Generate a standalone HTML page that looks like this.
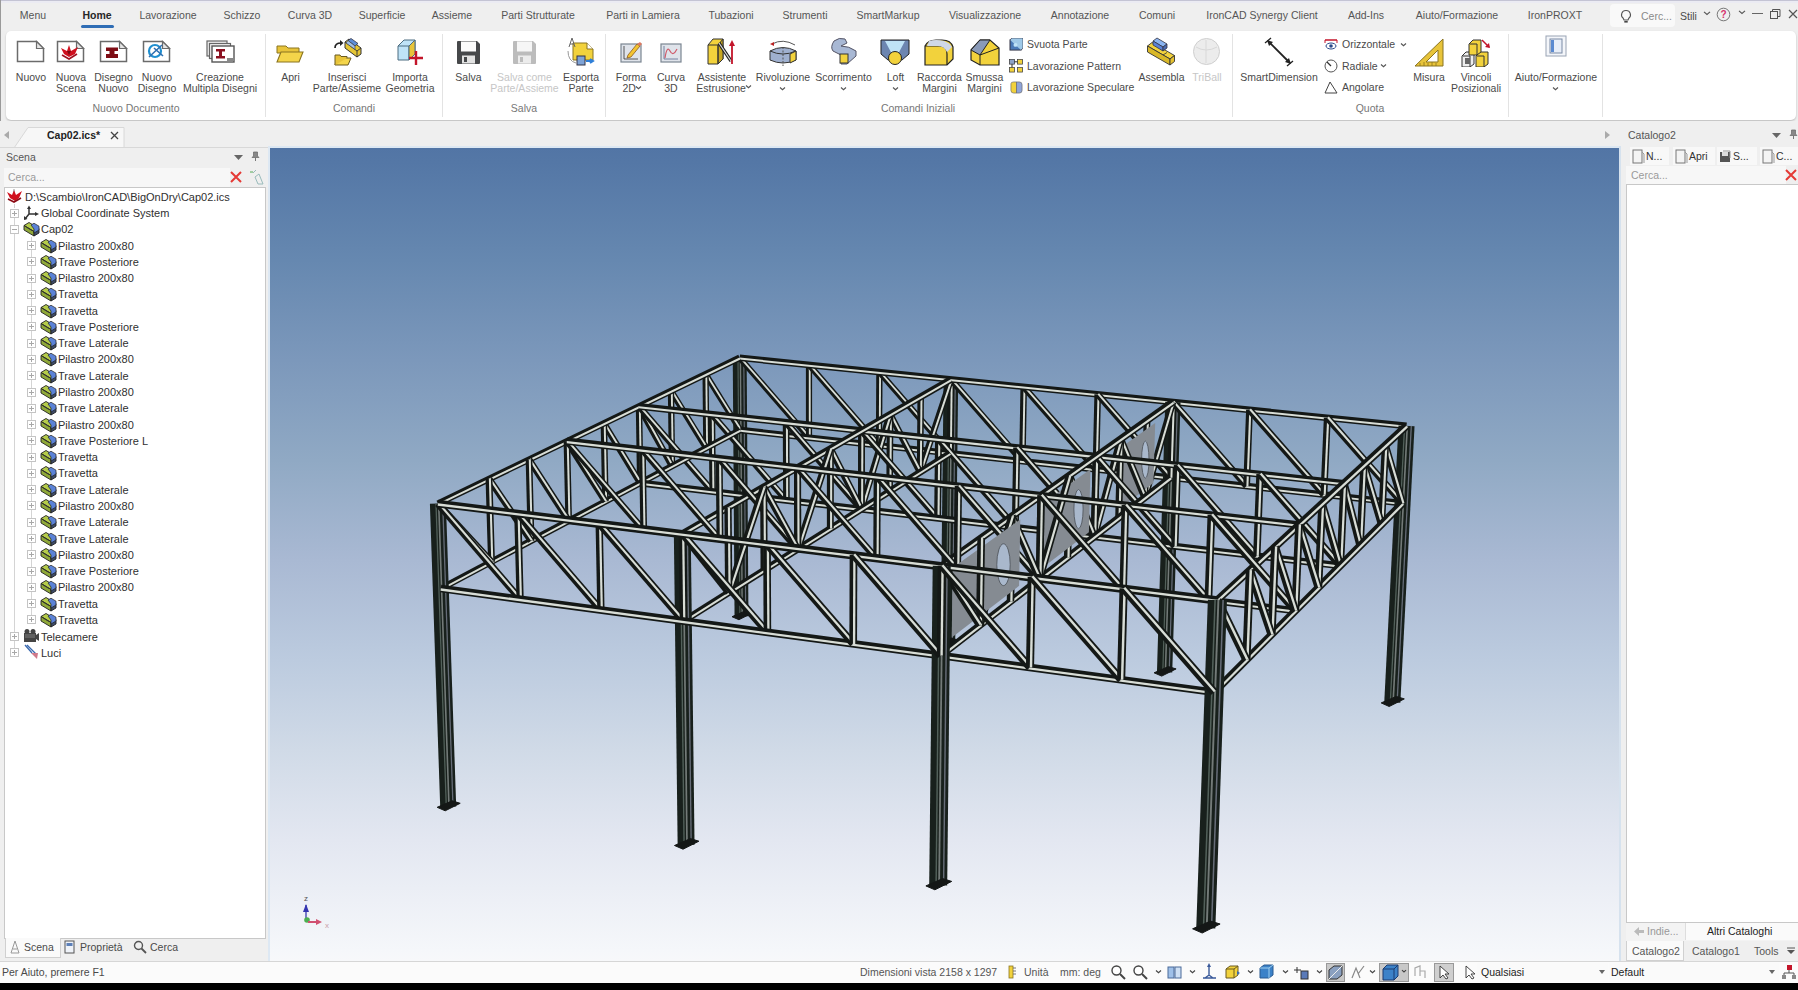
<!DOCTYPE html>
<html><head><meta charset="utf-8"><style>
html,body{margin:0;padding:0;width:1798px;height:990px;overflow:hidden;background:#eee;font-family:"Liberation Sans", sans-serif;}
.b{position:absolute;}
.t{position:absolute;white-space:nowrap;font-family:"Liberation Sans", sans-serif;}
</style></head><body>
<div class="b" style="left:0px;top:0px;width:1798px;height:990px;background:#eeeeee"></div><div class="b" style="left:0px;top:0px;width:1798px;height:31px;background:#efefef"></div><div class="b" style="left:0px;top:0px;width:1798px;height:1px;background:#c4c4d4"></div><div class="b" style="left:0px;top:1px;width:1798px;height:2px;background:#ebebf3"></div><div class="t" style="left:-167px;width:400px;text-align:center;top:4.5px;line-height:21.0px;font-size:10.5px;color:#555;font-weight:normal;">Menu</div><div class="t" style="left:-103px;width:400px;text-align:center;top:4.5px;line-height:21.0px;font-size:10.5px;color:#262626;font-weight:bold;">Home</div><div class="t" style="left:-32px;width:400px;text-align:center;top:4.5px;line-height:21.0px;font-size:10.5px;color:#555;font-weight:normal;">Lavorazione</div><div class="t" style="left:42px;width:400px;text-align:center;top:4.5px;line-height:21.0px;font-size:10.5px;color:#555;font-weight:normal;">Schizzo</div><div class="t" style="left:110px;width:400px;text-align:center;top:4.5px;line-height:21.0px;font-size:10.5px;color:#555;font-weight:normal;">Curva 3D</div><div class="t" style="left:182px;width:400px;text-align:center;top:4.5px;line-height:21.0px;font-size:10.5px;color:#555;font-weight:normal;">Superficie</div><div class="t" style="left:252px;width:400px;text-align:center;top:4.5px;line-height:21.0px;font-size:10.5px;color:#555;font-weight:normal;">Assieme</div><div class="t" style="left:338px;width:400px;text-align:center;top:4.5px;line-height:21.0px;font-size:10.5px;color:#555;font-weight:normal;">Parti Strutturate</div><div class="t" style="left:443px;width:400px;text-align:center;top:4.5px;line-height:21.0px;font-size:10.5px;color:#555;font-weight:normal;">Parti in Lamiera</div><div class="t" style="left:531px;width:400px;text-align:center;top:4.5px;line-height:21.0px;font-size:10.5px;color:#555;font-weight:normal;">Tubazioni</div><div class="t" style="left:605px;width:400px;text-align:center;top:4.5px;line-height:21.0px;font-size:10.5px;color:#555;font-weight:normal;">Strumenti</div><div class="t" style="left:688px;width:400px;text-align:center;top:4.5px;line-height:21.0px;font-size:10.5px;color:#555;font-weight:normal;">SmartMarkup</div><div class="t" style="left:785px;width:400px;text-align:center;top:4.5px;line-height:21.0px;font-size:10.5px;color:#555;font-weight:normal;">Visualizzazione</div><div class="t" style="left:880px;width:400px;text-align:center;top:4.5px;line-height:21.0px;font-size:10.5px;color:#555;font-weight:normal;">Annotazione</div><div class="t" style="left:957px;width:400px;text-align:center;top:4.5px;line-height:21.0px;font-size:10.5px;color:#555;font-weight:normal;">Comuni</div><div class="t" style="left:1062px;width:400px;text-align:center;top:4.5px;line-height:21.0px;font-size:10.5px;color:#555;font-weight:normal;">IronCAD Synergy Client</div><div class="t" style="left:1166px;width:400px;text-align:center;top:4.5px;line-height:21.0px;font-size:10.5px;color:#555;font-weight:normal;">Add-Ins</div><div class="t" style="left:1257px;width:400px;text-align:center;top:4.5px;line-height:21.0px;font-size:10.5px;color:#555;font-weight:normal;">Aiuto/Formazione</div><div class="t" style="left:1355px;width:400px;text-align:center;top:4.5px;line-height:21.0px;font-size:10.5px;color:#555;font-weight:normal;">IronPROXT</div><div class="b" style="left:81px;top:25px;width:33px;height:3px;background:#2f6db5;border-radius:2px"></div><div class="b" style="left:1610px;top:4px;width:65px;height:23px;background:#f9f9f9;border-radius:4px"></div><svg class="b" style="left:1620px;top:9px" width="12" height="15" viewBox="0 0 12 15"><path d="M6 1.5A4.3 4.3 0 0 0 3.2 9.2L4 11H8L8.8 9.2A4.3 4.3 0 0 0 6 1.5Z" fill="none" stroke="#555" stroke-width="1.1"/><rect x="4.3" y="12" width="3.4" height="1.6" fill="#444"/></svg><div class="t" style="left:1641px;top:5.5px;line-height:21.0px;font-size:10.5px;color:#8a8a8a;font-weight:normal;">Cerc...</div><div class="t" style="left:1680px;top:5.5px;line-height:21.0px;font-size:10.5px;color:#4a4a4a;font-weight:normal;">Stili</div><svg class="b" style="left:1703px;top:10px" width="8" height="6" viewBox="0 0 8 6"><path d="M1 1.7999999999999998 L4 4.5 L7 1.7999999999999998" stroke="#555" stroke-width="1.1" fill="none"/></svg><svg class="b" style="left:1716px;top:7px" width="15" height="15" viewBox="0 0 15 15"><circle cx="7.5" cy="7.5" r="6.3" fill="none" stroke="#777" stroke-width="1"/><text x="7.5" y="11.3" text-anchor="middle" font-size="10" font-weight="bold" fill="#d6336c" font-family="Liberation Sans">?</text></svg><svg class="b" style="left:1738px;top:9px" width="8" height="6" viewBox="0 0 8 6"><path d="M1 1.7999999999999998 L4 4.5 L7 1.7999999999999998" stroke="#555" stroke-width="1.1" fill="none"/></svg><div class="b" style="left:1752px;top:13px;width:11px;height:1px;background:#666"></div><svg class="b" style="left:1770px;top:9px" width="11" height="10" viewBox="0 0 11 10"><rect x="0.5" y="2.5" width="7" height="7" fill="none" stroke="#555"/><path d="M2.5 2.5V0.5H10V7.5H8" fill="none" stroke="#555"/></svg><svg class="b" style="left:1788px;top:9px" width="10" height="10" viewBox="0 0 10 10"><path d="M1 1L9 9M9 1L1 9" stroke="#555" stroke-width="1.2"/></svg><div class="b" style="left:6px;top:31px;width:1790px;height:89px;background:#fff;border-radius:5px;box-shadow:0 1px 2px rgba(0,0,0,0.22)"></div><div class="b" style="left:265px;top:34px;width:1px;height:83px;background:#e3e3e3"></div><div class="b" style="left:442px;top:34px;width:1px;height:83px;background:#e3e3e3"></div><div class="b" style="left:605px;top:34px;width:1px;height:83px;background:#e3e3e3"></div><div class="b" style="left:1232px;top:34px;width:1px;height:83px;background:#e3e3e3"></div><div class="b" style="left:1508px;top:34px;width:1px;height:83px;background:#e3e3e3"></div><div class="b" style="left:1602px;top:34px;width:1px;height:83px;background:#e3e3e3"></div><div class="t" style="left:-169px;width:400px;text-align:center;top:66.5px;line-height:21.0px;font-size:10.5px;color:#4a4a4a;font-weight:normal;">Nuovo</div><svg class="b" style="left:16px;top:40px" width="29" height="23" viewBox="0 0 29 23" preserveAspectRatio="none"><path d="M1.5 1.5H20.5L27.5 8.5V21.5H1.5Z" fill="#fff" stroke="#6b6b6b" stroke-width="1.5"/><path d="M20.5 1.5V8.5H27.5Z" fill="#e6e6e6" stroke="#6b6b6b" stroke-width="1.2"/></svg><div class="t" style="left:-129px;width:400px;text-align:center;top:66.5px;line-height:21.0px;font-size:10.5px;color:#4a4a4a;font-weight:normal;">Nuova</div><div class="t" style="left:-129px;width:400px;text-align:center;top:77.5px;line-height:21.0px;font-size:10.5px;color:#4a4a4a;font-weight:normal;">Scena</div><svg class="b" style="left:56px;top:40px" width="29" height="23" viewBox="0 0 29 23" preserveAspectRatio="none"><path d="M1.5 1.5H20.5L27.5 8.5V21.5H1.5Z" fill="#fff" stroke="#6b6b6b" stroke-width="1.5"/><path d="M20.5 1.5V8.5H27.5Z" fill="#e6e6e6" stroke="#6b6b6b" stroke-width="1.2"/><path d="M5 8L11 11L13 5L15 11L22 7L19 14L13 17L8 14Z" fill="#d0101e"/><path d="M6 15L13 19L21 14" stroke="#a01020" stroke-width="1.6" fill="none"/><path d="M11 11L15 11L13 15Z" fill="#7a0a12"/></svg><div class="t" style="left:-86.5px;width:400px;text-align:center;top:66.5px;line-height:21.0px;font-size:10.5px;color:#4a4a4a;font-weight:normal;">Disegno</div><div class="t" style="left:-86.5px;width:400px;text-align:center;top:77.5px;line-height:21.0px;font-size:10.5px;color:#4a4a4a;font-weight:normal;">Nuovo</div><svg class="b" style="left:99px;top:40px" width="29" height="23" viewBox="0 0 29 23" preserveAspectRatio="none"><path d="M1.5 1.5H20.5L27.5 8.5V21.5H1.5Z" fill="#fff" stroke="#6b6b6b" stroke-width="1.5"/><path d="M20.5 1.5V8.5H27.5Z" fill="#e6e6e6" stroke="#6b6b6b" stroke-width="1.2"/><path d="M7 7.5H19V11H15.5V14H19V18H7V14H10.5V11H7Z" fill="#7e0c14"/></svg><div class="t" style="left:-43px;width:400px;text-align:center;top:66.5px;line-height:21.0px;font-size:10.5px;color:#4a4a4a;font-weight:normal;">Nuovo</div><div class="t" style="left:-43px;width:400px;text-align:center;top:77.5px;line-height:21.0px;font-size:10.5px;color:#4a4a4a;font-weight:normal;">Disegno</div><svg class="b" style="left:142px;top:40px" width="29" height="23" viewBox="0 0 29 23" preserveAspectRatio="none"><path d="M1.5 1.5H20.5L27.5 8.5V21.5H1.5Z" fill="#fff" stroke="#6b6b6b" stroke-width="1.5"/><path d="M20.5 1.5V8.5H27.5Z" fill="#e6e6e6" stroke="#6b6b6b" stroke-width="1.2"/><circle cx="13" cy="11" r="6" fill="none" stroke="#1f8fd0" stroke-width="2.2"/><path d="M7 17L20 5M12 8L21 16" stroke="#2f6fb0" stroke-width="1.6"/></svg><div class="t" style="left:20px;width:400px;text-align:center;top:66.5px;line-height:21.0px;font-size:10.5px;color:#4a4a4a;font-weight:normal;">Creazione</div><div class="t" style="left:20px;width:400px;text-align:center;top:77.5px;line-height:21.0px;font-size:10.5px;color:#4a4a4a;font-weight:normal;">Multipla Disegni</div><svg class="b" style="left:206px;top:40px" width="29" height="23" viewBox="0 0 29 23" preserveAspectRatio="none"><rect x="1" y="1" width="20" height="15" fill="#eee" stroke="#666" stroke-width="1.2"/><rect x="3.5" y="3.5" width="21" height="15" fill="#f2f2f2" stroke="#666" stroke-width="1.2"/><rect x="6" y="6" width="22" height="16" fill="#fff" stroke="#555" stroke-width="1.4"/><path d="M10 9H19V11.5H16V16H19V18.5H10V16H13V11.5H10Z" fill="#8b1020"/><rect x="21" y="18" width="6" height="3" fill="#888"/></svg><div class="t" style="left:-64px;width:400px;text-align:center;top:97.5px;line-height:21.0px;font-size:10.5px;color:#777;font-weight:normal;">Nuovo Documento</div><div class="t" style="left:90.5px;width:400px;text-align:center;top:66.5px;line-height:21.0px;font-size:10.5px;color:#4a4a4a;font-weight:normal;">Apri</div><svg class="b" style="left:276px;top:43px" width="28" height="20" viewBox="0 0 28 20" preserveAspectRatio="none"><path d="M1 3H10L12 5H23V10H1Z" fill="#e8c43a" stroke="#8a7420" stroke-width="1"/><path d="M1 19L5 9H27L23 19Z" fill="#f4d54a" stroke="#8a7420" stroke-width="1.1"/></svg><div class="t" style="left:147px;width:400px;text-align:center;top:66.5px;line-height:21.0px;font-size:10.5px;color:#4a4a4a;font-weight:normal;">Inserisci</div><div class="t" style="left:147px;width:400px;text-align:center;top:77.5px;line-height:21.0px;font-size:10.5px;color:#4a4a4a;font-weight:normal;">Parte/Assieme</div><svg class="b" style="left:332px;top:37px" width="30" height="29" viewBox="0 0 30 29" preserveAspectRatio="none"><path d="M3 28L5 21H19L16 28Z" fill="#f4d54a" stroke="#6a5a20"/><path d="M3 28V18H8L9 19.5H15V21" fill="#e8c43a" stroke="#6a5a20"/><path d="M13 5L17 2L29 11V17L25 20L13 11Z" fill="#e6c634" stroke="#333" stroke-width="1"/><path d="M13 5L25 14V20M25 14L29 11" fill="none" stroke="#333" stroke-width="0.9"/><path d="M16 3.5L19 1.5L26 6.5L23 9Z" fill="#5d8ed8" stroke="#334" stroke-width="0.8"/><path d="M14 6L23 12.5V9L16 3.5Z" fill="#9fc0e8" stroke="#334" stroke-width="0.6"/><path d="M3 11Q3 6 9 6" stroke="#222" stroke-width="1.7" fill="none"/><path d="M8 3L11.5 6L8 9Z" fill="#222"/></svg><div class="t" style="left:210px;width:400px;text-align:center;top:66.5px;line-height:21.0px;font-size:10.5px;color:#4a4a4a;font-weight:normal;">Importa</div><div class="t" style="left:210px;width:400px;text-align:center;top:77.5px;line-height:21.0px;font-size:10.5px;color:#4a4a4a;font-weight:normal;">Geometria</div><svg class="b" style="left:396px;top:38px" width="27" height="28" viewBox="0 0 27 28" preserveAspectRatio="none"><path d="M2 8L8 2H19V16L13 22H2Z" fill="#bfe3f7" stroke="#4c6d80"/><path d="M2 8H13V22M13 8L19 2" stroke="#4c6d80" fill="none"/><path d="M13 8L19 2V16L13 22Z" fill="#e8c43a" stroke="#4c6d80"/><path d="M20 13V27M13 20H27" stroke="#c3152a" stroke-width="2.4"/></svg><div class="t" style="left:154px;width:400px;text-align:center;top:97.5px;line-height:21.0px;font-size:10.5px;color:#777;font-weight:normal;">Comandi</div><div class="t" style="left:268.5px;width:400px;text-align:center;top:66.5px;line-height:21.0px;font-size:10.5px;color:#4a4a4a;font-weight:normal;">Salva</div><svg class="b" style="left:456px;top:40px" width="25" height="25" viewBox="0 0 25 25" preserveAspectRatio="none"><path d="M1 2Q1 1 2 1H21L24 4V23Q24 24 23 24H2Q1 24 1 23Z" fill="#46484a"/><rect x="5" y="1.5" width="15" height="10" fill="#fbfbfb"/><rect x="6" y="15.5" width="13" height="8" fill="#e2e2e2"/><rect x="8" y="17" width="3" height="5" fill="#46484a"/></svg><div class="t" style="left:324.5px;width:400px;text-align:center;top:66.5px;line-height:21.0px;font-size:10.5px;color:#c6c6c6;font-weight:normal;">Salva come</div><div class="t" style="left:324.5px;width:400px;text-align:center;top:77.5px;line-height:21.0px;font-size:10.5px;color:#c6c6c6;font-weight:normal;">Parte/Assieme</div><svg class="b" style="left:512px;top:40px" width="25" height="25" viewBox="0 0 25 25" preserveAspectRatio="none"><path d="M1 2Q1 1 2 1H21L24 4V23Q24 24 23 24H2Q1 24 1 23Z" fill="#bcbcbc"/><rect x="5" y="1.5" width="15" height="10" fill="#f6f6f6"/><rect x="6" y="15.5" width="13" height="8" fill="#ececec"/><rect x="8" y="17" width="3" height="5" fill="#bcbcbc"/></svg><div class="t" style="left:381px;width:400px;text-align:center;top:66.5px;line-height:21.0px;font-size:10.5px;color:#4a4a4a;font-weight:normal;">Esporta</div><div class="t" style="left:381px;width:400px;text-align:center;top:77.5px;line-height:21.0px;font-size:10.5px;color:#4a4a4a;font-weight:normal;">Parte</div><svg class="b" style="left:566px;top:37px" width="29" height="29" viewBox="0 0 29 29" preserveAspectRatio="none"><path d="M7 6H21L27 12V23H7Z" fill="#f2d23c" stroke="#8a7420"/><path d="M21 6V12H27" fill="#fff" stroke="#8a7420"/><path d="M3 10L6 1L9 10M4 7H8" stroke="#666" stroke-width="1" fill="none"/><path d="M2 14Q2 24 10 26" stroke="#999" fill="none"/><rect x="11" y="19" width="8" height="9" fill="#7fa3d6" stroke="#334"/><path d="M20 24H26M24 22L27 24L24 26" stroke="#2f7fd8" stroke-width="2" fill="none"/></svg><div class="t" style="left:324px;width:400px;text-align:center;top:97.5px;line-height:21.0px;font-size:10.5px;color:#777;font-weight:normal;">Salva</div><div class="t" style="left:431px;width:400px;text-align:center;top:66.5px;line-height:21.0px;font-size:10.5px;color:#4a4a4a;font-weight:normal;">Forma</div><div class="t" style="left:431px;width:400px;text-align:center;top:77.5px;line-height:21.0px;font-size:10.5px;color:#4a4a4a;font-weight:normal;">2D&#8202;&#8202;&#8202;&#8202;</div><svg class="b" style="left:620px;top:41px" width="22" height="22" viewBox="0 0 22 22" preserveAspectRatio="none"><rect x="1" y="3" width="20" height="18" fill="#dfe3ea" stroke="#7b8591" stroke-width="1.2"/><path d="M4 5V18H18" stroke="#333" stroke-width="0.8" fill="none"/><path d="M8 14L17 3L20 5L11 16L7 17Z" fill="#f4c430" stroke="#8a5a20" stroke-width="0.8"/><path d="M17 3L20 1L22 3L20 5" fill="#e07a5f"/></svg><svg class="b" style="left:634.5px;top:84.5px" width="7.0" height="5.0" viewBox="0 0 7.0 5.0"><path d="M1 1.5 L3.5 3.75 L6.0 1.5" stroke="#555" stroke-width="1.1" fill="none"/></svg><div class="t" style="left:471px;width:400px;text-align:center;top:66.5px;line-height:21.0px;font-size:10.5px;color:#4a4a4a;font-weight:normal;">Curva</div><div class="t" style="left:471px;width:400px;text-align:center;top:77.5px;line-height:21.0px;font-size:10.5px;color:#4a4a4a;font-weight:normal;">3D</div><svg class="b" style="left:660px;top:41px" width="22" height="22" viewBox="0 0 22 22" preserveAspectRatio="none"><rect x="1" y="3" width="20" height="18" fill="#dfe3ea" stroke="#7b8591" stroke-width="1.2"/><path d="M4 5V18H18" stroke="#5a6a90" stroke-width="0.8" fill="none"/><path d="M5 17Q7 4 10 10T17 8" stroke="#d05a6a" stroke-width="1.2" fill="none"/></svg><div class="t" style="left:522px;width:400px;text-align:center;top:66.5px;line-height:21.0px;font-size:10.5px;color:#4a4a4a;font-weight:normal;">Assistente</div><div class="t" style="left:522px;width:400px;text-align:center;top:77.5px;line-height:21.0px;font-size:10.5px;color:#4a4a4a;font-weight:normal;">Estrusione&#8202;&#8202;</div><svg class="b" style="left:707px;top:37px" width="30" height="28" viewBox="0 0 30 28" preserveAspectRatio="none"><path d="M1 8L6 2H16V22L11 27H1Z" fill="#f2d23c" stroke="#333"/><path d="M11 8L16 2V22L11 27Z" fill="#c9a820" stroke="#333"/><path d="M1 8H11V27" fill="none" stroke="#333"/><path d="M12 6L24 24" stroke="#222" stroke-width="3.2"/><path d="M12 6L24 24" stroke="#ddd" stroke-width="1.2"/><path d="M25 27V6" stroke="#c3152a" stroke-width="1.8"/><path d="M22 9L25 3L28 9Z" fill="#c3152a"/></svg><svg class="b" style="left:744.5px;top:83.5px" width="7.0" height="5.0" viewBox="0 0 7.0 5.0"><path d="M1 1.5 L3.5 3.75 L6.0 1.5" stroke="#555" stroke-width="1.1" fill="none"/></svg><div class="t" style="left:583px;width:400px;text-align:center;top:66.5px;line-height:21.0px;font-size:10.5px;color:#4a4a4a;font-weight:normal;">Rivoluzione</div><svg class="b" style="left:768px;top:39px" width="30" height="27" viewBox="0 0 30 27" preserveAspectRatio="none"><path d="M2 12Q15 5 28 12V21Q15 27 2 21Z" fill="#9fb0cf" stroke="#333"/><path d="M2 12Q15 18 28 12" fill="none" stroke="#333"/><path d="M22 15L28 12V21L22 24Z" fill="#f2d23c" stroke="#333"/><path d="M15 8V27" stroke="#555" stroke-dasharray="2 1.5"/><path d="M4 5Q15 -1 27 6" stroke="#555" fill="none"/><path d="M2 5L6 3L6 7Z" fill="#b22"/></svg><svg class="b" style="left:778.5px;top:85.5px" width="7.0" height="5.0" viewBox="0 0 7.0 5.0"><path d="M1 1.5 L3.5 3.75 L6.0 1.5" stroke="#555" stroke-width="1.1" fill="none"/></svg><div class="t" style="left:643.5px;width:400px;text-align:center;top:66.5px;line-height:21.0px;font-size:10.5px;color:#4a4a4a;font-weight:normal;">Scorrimento</div><svg class="b" style="left:829px;top:37px" width="29" height="28" viewBox="0 0 29 28" preserveAspectRatio="none"><path d="M5 4Q10 0 16 2L18 6L12 9Q20 9 27 14V19L18 27H12V18L4 14Q1 10 5 4Z" fill="#a8b8d4" stroke="#556"/><rect x="11" y="17" width="8" height="9" fill="#f2d23c" stroke="#333"/></svg><svg class="b" style="left:839.5px;top:85.5px" width="7.0" height="5.0" viewBox="0 0 7.0 5.0"><path d="M1 1.5 L3.5 3.75 L6.0 1.5" stroke="#555" stroke-width="1.1" fill="none"/></svg><div class="t" style="left:695.5px;width:400px;text-align:center;top:66.5px;line-height:21.0px;font-size:10.5px;color:#4a4a4a;font-weight:normal;">Loft</div><svg class="b" style="left:880px;top:38px" width="30" height="28" viewBox="0 0 30 28" preserveAspectRatio="none"><path d="M1 2H29V16L22 22H8L1 16Z" fill="#6c85b0" stroke="#222"/><path d="M5 3H25L17 18H13Z" fill="#bfe3f7"/><circle cx="15" cy="20" r="6.5" fill="#f2d23c" stroke="#222"/></svg><svg class="b" style="left:891.5px;top:85.5px" width="7.0" height="5.0" viewBox="0 0 7.0 5.0"><path d="M1 1.5 L3.5 3.75 L6.0 1.5" stroke="#555" stroke-width="1.1" fill="none"/></svg><div class="t" style="left:739.5px;width:400px;text-align:center;top:66.5px;line-height:21.0px;font-size:10.5px;color:#4a4a4a;font-weight:normal;">Raccorda</div><div class="t" style="left:739.5px;width:400px;text-align:center;top:77.5px;line-height:21.0px;font-size:10.5px;color:#4a4a4a;font-weight:normal;">Margini</div><svg class="b" style="left:924px;top:38px" width="30" height="28" viewBox="0 0 30 28" preserveAspectRatio="none"><path d="M1 8Q4 2 12 2H18Q27 2 29 9V21L23 27H1Z" fill="#f2d23c" stroke="#222" stroke-width="1.2"/><path d="M1 8H15Q23 8 23 16V27" fill="none" stroke="#222" stroke-width="1.2"/><path d="M5 3Q12 1 20 3Q26 5 28 9L23 14Q20 8 14 8H3Z" fill="#cfd8e6"/></svg><div class="t" style="left:784.5px;width:400px;text-align:center;top:66.5px;line-height:21.0px;font-size:10.5px;color:#4a4a4a;font-weight:normal;">Smussa</div><div class="t" style="left:784.5px;width:400px;text-align:center;top:77.5px;line-height:21.0px;font-size:10.5px;color:#4a4a4a;font-weight:normal;">Margini</div><svg class="b" style="left:970px;top:38px" width="30" height="28" viewBox="0 0 30 28" preserveAspectRatio="none"><path d="M1 12L10 2H20L29 10V27H10L1 22Z" fill="#f2d23c" stroke="#222" stroke-width="1.2"/><path d="M1 12L10 2H20L10 17Z" fill="#8a9ab8" stroke="#222"/><path d="M10 17V27M10 17L29 10" fill="none" stroke="#222"/></svg><svg class="b" style="left:1009px;top:38px" width="14" height="13" viewBox="0 0 14 14" preserveAspectRatio="none"><rect x="1" y="2" width="11" height="11" fill="#4a7ab8" stroke="#334"/><path d="M1 2L3 0H14V11L12 13" fill="#9fc9e8" stroke="#334" stroke-width="0.7"/><circle cx="6.5" cy="7.5" r="2" fill="#bfe3f7"/></svg><div class="t" style="left:1027px;top:34.0px;line-height:21.0px;font-size:10.5px;color:#4a4a4a;font-weight:normal;">Svuota Parte</div><svg class="b" style="left:1009px;top:59px" width="14" height="14" viewBox="0 0 14 15" preserveAspectRatio="none"><rect x="0.5" y="0.5" width="5" height="5" fill="#8fa4c8" stroke="#444" stroke-width="0.8"/><rect x="8.5" y="0.5" width="5" height="5" fill="#f2d23c" stroke="#444" stroke-width="0.8"/><rect x="0.5" y="9" width="5" height="5" fill="#f2d23c" stroke="#444" stroke-width="0.8"/><rect x="8.5" y="9" width="5" height="5" fill="#f2d23c" stroke="#444" stroke-width="0.8"/><path d="M5.5 3H8.5M3 5.5V9" stroke="#222"/></svg><div class="t" style="left:1027px;top:55.5px;line-height:21.0px;font-size:10.5px;color:#4a4a4a;font-weight:normal;">Lavorazione Pattern</div><svg class="b" style="left:1010px;top:81px" width="13" height="13" viewBox="0 0 14 14" preserveAspectRatio="none"><path d="M1 3Q1 1 4 1H7V13H4Q1 13 1 10Z" fill="#f2d23c" stroke="#666" stroke-width="0.7"/><path d="M7 1H10Q13 1 13 4V10Q13 13 10 13H7Z" fill="#8fa4d8" stroke="#666" stroke-width="0.7"/></svg><div class="t" style="left:1027px;top:77.0px;line-height:21.0px;font-size:10.5px;color:#4a4a4a;font-weight:normal;">Lavorazione Speculare</div><div class="t" style="left:961.5px;width:400px;text-align:center;top:66.5px;line-height:21.0px;font-size:10.5px;color:#4a4a4a;font-weight:normal;">Assembla</div><svg class="b" style="left:1146px;top:37px" width="30" height="29" viewBox="0 0 30 29" preserveAspectRatio="none"><path d="M1.5 9L6 5.5L28.5 18.5L24 22Z" fill="#f2d23c" stroke="#333" stroke-width="0.9"/><path d="M1.5 9L24 22V28L1.5 15Z" fill="#d9b828" stroke="#333" stroke-width="0.9"/><path d="M24 22L28.5 18.5V24.5L24 28Z" fill="#e6c230" stroke="#333" stroke-width="0.9"/><path d="M17 18L21 15.5" stroke="#333" stroke-width="0.8"/><path d="M7 4L11 1L21 7L17 10Z" fill="#8ab4f0" stroke="#334" stroke-width="0.8"/><path d="M7 4L17 10V14L7 8Z" fill="#5b82d6" stroke="#334" stroke-width="0.8"/><path d="M17 10L21 7V11L17 14Z" fill="#4a6ab0" stroke="#334" stroke-width="0.8"/></svg><div class="t" style="left:1007px;width:400px;text-align:center;top:66.5px;line-height:21.0px;font-size:10.5px;color:#c6c6c6;font-weight:normal;">TriBall</div><svg class="b" style="left:1192px;top:37px" width="29" height="29" viewBox="0 0 29 29" preserveAspectRatio="none"><circle cx="14.5" cy="14.5" r="13" fill="#ececec" stroke="#cfcfcf"/><path d="M4 10Q14 16 25 10M14 3V26" stroke="#d8d8d8" fill="none"/></svg><div class="t" style="left:718px;width:400px;text-align:center;top:97.5px;line-height:21.0px;font-size:10.5px;color:#777;font-weight:normal;">Comandi Iniziali</div><div class="t" style="left:1079px;width:400px;text-align:center;top:66.5px;line-height:21.0px;font-size:10.5px;color:#4a4a4a;font-weight:normal;">SmartDimension</div><svg class="b" style="left:1263px;top:37px" width="32" height="30" viewBox="0 0 32 30" preserveAspectRatio="none"><path d="M2 6L8 1M24 29L30 24" stroke="#222" stroke-width="1.3"/><path d="M5 4L27 26" stroke="#222" stroke-width="1.8"/><path d="M4 3L10 5L6 9Z M28 27L22 25L26 21Z" fill="#222"/></svg><svg class="b" style="left:1324px;top:39px" width="14" height="11" viewBox="0 0 14 11" preserveAspectRatio="none"><path d="M1 1H13" stroke="#c3152a" stroke-width="1.5"/><path d="M1 1V4M13 1V4" stroke="#c3152a"/><ellipse cx="7" cy="7" rx="5" ry="3" fill="#fff" stroke="#2a4a8a"/><circle cx="7" cy="7" r="1.8" fill="#2a4a8a"/></svg><div class="t" style="left:1342px;top:34.0px;line-height:21.0px;font-size:10.5px;color:#4a4a4a;font-weight:normal;">Orizzontale</div><svg class="b" style="left:1399.5px;top:41.5px" width="7.0" height="5.0" viewBox="0 0 7.0 5.0"><path d="M1 1.5 L3.5 3.75 L6.0 1.5" stroke="#555" stroke-width="1.1" fill="none"/></svg><svg class="b" style="left:1324px;top:59px" width="14" height="14" viewBox="0 0 14 14" preserveAspectRatio="none"><circle cx="7" cy="7" r="6" fill="none" stroke="#555" stroke-width="1"/><path d="M7 7L3 3" stroke="#333" stroke-width="1.2"/></svg><div class="t" style="left:1342px;top:55.5px;line-height:21.0px;font-size:10.5px;color:#4a4a4a;font-weight:normal;">Radiale</div><svg class="b" style="left:1379.5px;top:62.5px" width="7.0" height="5.0" viewBox="0 0 7.0 5.0"><path d="M1 1.5 L3.5 3.75 L6.0 1.5" stroke="#555" stroke-width="1.1" fill="none"/></svg><svg class="b" style="left:1324px;top:80px" width="14" height="14" viewBox="0 0 14 14" preserveAspectRatio="none"><path d="M1 13H13L6 2Z" fill="none" stroke="#444" stroke-width="1"/></svg><div class="t" style="left:1342px;top:77.0px;line-height:21.0px;font-size:10.5px;color:#4a4a4a;font-weight:normal;">Angolare</div><div class="t" style="left:1229px;width:400px;text-align:center;top:66.5px;line-height:21.0px;font-size:10.5px;color:#4a4a4a;font-weight:normal;">Misura</div><svg class="b" style="left:1414px;top:38px" width="30" height="29" viewBox="0 0 30 29" preserveAspectRatio="none"><path d="M1 28L29 1V28Z" fill="#e8c43a" stroke="#8a7420"/><path d="M12 24L24 12V24Z" fill="#fff" stroke="#8a7420"/><path d="M6 28V25M10 28V24M14 28V25M18 28V24M22 28V25" stroke="#8a7420" stroke-width="0.8"/></svg><div class="t" style="left:1276px;width:400px;text-align:center;top:66.5px;line-height:21.0px;font-size:10.5px;color:#4a4a4a;font-weight:normal;">Vincoli</div><div class="t" style="left:1276px;width:400px;text-align:center;top:77.5px;line-height:21.0px;font-size:10.5px;color:#4a4a4a;font-weight:normal;">Posizionali</div><svg class="b" style="left:1461px;top:37px" width="30" height="30" viewBox="0 0 30 30" preserveAspectRatio="none"><path d="M1 19L5 15H13V27L9 30H1Z" fill="#eee" stroke="#333"/><path d="M15 19L19 15H27V27L23 30H15Z" fill="#f2d23c" stroke="#333"/><path d="M8 7L12 3H20V15L16 18H8Z" fill="#f2d23c" stroke="#333"/><path d="M2 19H9V30M16 19H23V30M9 7H16V18" fill="none" stroke="#333"/><path d="M21 3L28 10" stroke="#c3152a" stroke-width="1.5"/><path d="M29 11L24 10L28 6Z" fill="#c3152a"/><rect x="4" y="21" width="5" height="6" fill="#666"/></svg><div class="t" style="left:1170px;width:400px;text-align:center;top:97.5px;line-height:21.0px;font-size:10.5px;color:#777;font-weight:normal;">Quota</div><div class="t" style="left:1356px;width:400px;text-align:center;top:66.5px;line-height:21.0px;font-size:10.5px;color:#4a4a4a;font-weight:normal;">Aiuto/Formazione</div><svg class="b" style="left:1545px;top:35px" width="22" height="22" viewBox="0 0 22 22" preserveAspectRatio="none"><rect x="1" y="1" width="20" height="20" fill="#f4f6fa" stroke="#9aa4b4"/><rect x="5" y="4" width="12" height="14" fill="#e8eef8" stroke="#7a8aa4"/><rect x="6" y="5" width="3" height="12" fill="#5b8ad0"/></svg><svg class="b" style="left:1551.5px;top:85.5px" width="7.0" height="5.0" viewBox="0 0 7.0 5.0"><path d="M1 1.5 L3.5 3.75 L6.0 1.5" stroke="#555" stroke-width="1.1" fill="none"/></svg><div class="b" style="left:0px;top:0px;width:1px;height:983px;background:#9a9a9a"></div><div class="b" style="left:3px;top:121px;width:1px;height:862px;background:#d8d8d8"></div><div class="b" style="left:0px;top:121px;width:1798px;height:27px;background:#efefef"></div><svg class="b" style="left:3px;top:130px" width="8" height="10" viewBox="0 0 8 10"><path d="M6 1L1 5L6 9Z" fill="#aaa"/></svg><svg class="b" style="left:14px;top:127px" width="112" height="21" viewBox="0 0 112 21"><path d="M0 21L14 0.5H110V21Z" fill="#f7f7f7" stroke="#d8d8d8"/></svg><div class="t" style="left:47px;top:125.0px;line-height:21.0px;font-size:10.5px;color:#222;font-weight:bold;">Cap02.ics*</div><svg class="b" style="left:110px;top:131px" width="9" height="9" viewBox="0 0 9 9"><path d="M1 1L8 8M8 1L1 8" stroke="#444" stroke-width="1.3"/></svg><svg class="b" style="left:1603px;top:130px" width="8" height="10" viewBox="0 0 8 10"><path d="M2 1L7 5L2 9Z" fill="#aaa"/></svg><div class="b" style="left:0px;top:147px;width:1798px;height:1px;background:#d8d8d8"></div><div class="b" style="left:0px;top:148px;width:271px;height:813px;background:#efefef"></div><div class="t" style="left:6px;top:146.5px;line-height:21.0px;font-size:10.5px;color:#555;font-weight:normal;">Scena</div><svg class="b" style="left:234px;top:155px" width="9" height="5" viewBox="0 0 9 5"><path d="M0 0H9L4.5 5Z" fill="#666"/></svg><svg class="b" style="left:251px;top:151px" width="9" height="11" viewBox="0 0 9 11"><path d="M2.5 1H6.5V5L8 6.5H1L2.5 5Z" fill="#888" stroke="#666" stroke-width="0.7"/><path d="M4.5 6.5V10" stroke="#777" stroke-width="1"/></svg><div class="b" style="left:4px;top:168px;width:226px;height:19px;background:#f7f7f7"></div><div class="t" style="left:8px;top:166.5px;line-height:21.0px;font-size:10.5px;color:#9a9a9a;font-weight:normal;">Cerca...</div><svg class="b" style="left:229px;top:170px" width="14" height="14" viewBox="0 0 14 14"><path d="M2 2L12 12M12 2L2 12" stroke="#e53935" stroke-width="2"/></svg><svg class="b" style="left:249px;top:169px" width="15" height="16" viewBox="0 0 15 16"><path d="M4 4L7 1M9 15L6 8L10 5L14 15Z" fill="none" stroke="#9bb" stroke-width="1"/><path d="M1 3H4" stroke="#5a5"/></svg><div class="b" style="left:4px;top:187px;width:262px;height:752px;background:#fff;border:1px solid #c8c8c8;box-sizing:border-box"></div><div class="b" style="left:14px;top:204px;width:1px;height:4px;background:#d0d0d0"></div><div class="b" style="left:31px;top:237px;width:1px;height:383px;background:#d4d4d4"></div><div class="b" style="left:14px;top:218px;width:1px;height:435px;background:#d4d4d4"></div><svg class="b" style="left:6px;top:189px" width="17" height="16" viewBox="0 0 17 16"><path d="M1 3L6 6L8 1L10 6L16 2L13 9L9 12L4 9Z" fill="#d0101e"/><path d="M2 10L8 13L15 9" stroke="#8a0a14" stroke-width="1.6" fill="none"/><path d="M8 0V3" stroke="#555" stroke-width="0.6"/></svg><div class="t" style="left:25px;top:186.0px;line-height:22px;font-size:11px;color:#303030;font-weight:normal;">D:\Scambio\IronCAD\BigOnDry\Cap02.ics</div><svg class="b" style="left:9.5px;top:208.5px" width="9" height="9" viewBox="0 0 9 9"><rect x="0.5" y="0.5" width="8" height="8" fill="#fff" stroke="#c4c4c4"/><path d="M2 4.5H7" stroke="#a8a8a8"/><path d="M4.5 2V7" stroke="#a8a8a8"/></svg><svg class="b" style="left:23px;top:205px" width="16" height="16" viewBox="0 0 16 16"><path d="M6 3V9L14 9M6 9L2 14" stroke="#333" stroke-width="1.5" fill="none"/><path d="M4 4L6 0.5L8 4Z M12 7L16 9L12 11Z M1 11L1 15L4.5 14Z" fill="#333"/></svg><div class="t" style="left:41px;top:202.0px;line-height:22px;font-size:11px;color:#303030;font-weight:normal;">Global Coordinate System</div><svg class="b" style="left:9.5px;top:224.5px" width="9" height="9" viewBox="0 0 9 9"><rect x="0.5" y="0.5" width="8" height="8" fill="#fff" stroke="#c4c4c4"/><path d="M2 4.5H7" stroke="#a8a8a8"/></svg><svg class="b" style="left:23px;top:221px" width="17" height="16" viewBox="0 0 17 16"><path d="M1 4.5L6 1.5L16 7.5L11 10.5Z" fill="#b5cc4a" stroke="#222" stroke-width="0.9"/><path d="M1 4.5L11 10.5V15L1 9Z" fill="#8fa838" stroke="#222" stroke-width="0.9"/><path d="M11 10.5L16 7.5V12L11 15Z" fill="#3d4a66" stroke="#222" stroke-width="0.9"/><path d="M8 4L11 2.2L16 5.2V9L11 12V8Z" fill="#5b82d6" stroke="#222" stroke-width="0.7"/><path d="M3 6L9 9.6" stroke="#333" stroke-width="0.7"/></svg><div class="t" style="left:41px;top:218.0px;line-height:22px;font-size:11px;color:#303030;font-weight:normal;">Cap02</div><svg class="b" style="left:26.5px;top:241.0px" width="9" height="9" viewBox="0 0 9 9"><rect x="0.5" y="0.5" width="8" height="8" fill="#fff" stroke="#c4c4c4"/><path d="M2 4.5H7" stroke="#a8a8a8"/><path d="M4.5 2V7" stroke="#a8a8a8"/></svg><svg class="b" style="left:40px;top:237.5px" width="17" height="16" viewBox="0 0 17 16"><path d="M1 4.5L6 1.5L16 7.5L11 10.5Z" fill="#b5cc4a" stroke="#222" stroke-width="0.9"/><path d="M1 4.5L11 10.5V15L1 9Z" fill="#8fa838" stroke="#222" stroke-width="0.9"/><path d="M11 10.5L16 7.5V12L11 15Z" fill="#3d4a66" stroke="#222" stroke-width="0.9"/><path d="M8 4L11 2.2L16 5.2V9L11 12V8Z" fill="#5b82d6" stroke="#222" stroke-width="0.7"/><path d="M3 6L9 9.6" stroke="#333" stroke-width="0.7"/></svg><div class="t" style="left:58px;top:234.5px;line-height:22px;font-size:11px;color:#303030;font-weight:normal;">Pilastro 200x80</div><svg class="b" style="left:26.5px;top:257.28px" width="9" height="9" viewBox="0 0 9 9"><rect x="0.5" y="0.5" width="8" height="8" fill="#fff" stroke="#c4c4c4"/><path d="M2 4.5H7" stroke="#a8a8a8"/><path d="M4.5 2V7" stroke="#a8a8a8"/></svg><svg class="b" style="left:40px;top:253.77999999999997px" width="17" height="16" viewBox="0 0 17 16"><path d="M1 4.5L6 1.5L16 7.5L11 10.5Z" fill="#b5cc4a" stroke="#222" stroke-width="0.9"/><path d="M1 4.5L11 10.5V15L1 9Z" fill="#8fa838" stroke="#222" stroke-width="0.9"/><path d="M11 10.5L16 7.5V12L11 15Z" fill="#3d4a66" stroke="#222" stroke-width="0.9"/><path d="M8 4L11 2.2L16 5.2V9L11 12V8Z" fill="#5b82d6" stroke="#222" stroke-width="0.7"/><path d="M3 6L9 9.6" stroke="#333" stroke-width="0.7"/></svg><div class="t" style="left:58px;top:250.77999999999997px;line-height:22px;font-size:11px;color:#303030;font-weight:normal;">Trave Posteriore</div><svg class="b" style="left:26.5px;top:273.56px" width="9" height="9" viewBox="0 0 9 9"><rect x="0.5" y="0.5" width="8" height="8" fill="#fff" stroke="#c4c4c4"/><path d="M2 4.5H7" stroke="#a8a8a8"/><path d="M4.5 2V7" stroke="#a8a8a8"/></svg><svg class="b" style="left:40px;top:270.06px" width="17" height="16" viewBox="0 0 17 16"><path d="M1 4.5L6 1.5L16 7.5L11 10.5Z" fill="#b5cc4a" stroke="#222" stroke-width="0.9"/><path d="M1 4.5L11 10.5V15L1 9Z" fill="#8fa838" stroke="#222" stroke-width="0.9"/><path d="M11 10.5L16 7.5V12L11 15Z" fill="#3d4a66" stroke="#222" stroke-width="0.9"/><path d="M8 4L11 2.2L16 5.2V9L11 12V8Z" fill="#5b82d6" stroke="#222" stroke-width="0.7"/><path d="M3 6L9 9.6" stroke="#333" stroke-width="0.7"/></svg><div class="t" style="left:58px;top:267.06px;line-height:22px;font-size:11px;color:#303030;font-weight:normal;">Pilastro 200x80</div><svg class="b" style="left:26.5px;top:289.84000000000003px" width="9" height="9" viewBox="0 0 9 9"><rect x="0.5" y="0.5" width="8" height="8" fill="#fff" stroke="#c4c4c4"/><path d="M2 4.5H7" stroke="#a8a8a8"/><path d="M4.5 2V7" stroke="#a8a8a8"/></svg><svg class="b" style="left:40px;top:286.34000000000003px" width="17" height="16" viewBox="0 0 17 16"><path d="M1 4.5L6 1.5L16 7.5L11 10.5Z" fill="#b5cc4a" stroke="#222" stroke-width="0.9"/><path d="M1 4.5L11 10.5V15L1 9Z" fill="#8fa838" stroke="#222" stroke-width="0.9"/><path d="M11 10.5L16 7.5V12L11 15Z" fill="#3d4a66" stroke="#222" stroke-width="0.9"/><path d="M8 4L11 2.2L16 5.2V9L11 12V8Z" fill="#5b82d6" stroke="#222" stroke-width="0.7"/><path d="M3 6L9 9.6" stroke="#333" stroke-width="0.7"/></svg><div class="t" style="left:58px;top:283.34000000000003px;line-height:22px;font-size:11px;color:#303030;font-weight:normal;">Travetta</div><svg class="b" style="left:26.5px;top:306.12px" width="9" height="9" viewBox="0 0 9 9"><rect x="0.5" y="0.5" width="8" height="8" fill="#fff" stroke="#c4c4c4"/><path d="M2 4.5H7" stroke="#a8a8a8"/><path d="M4.5 2V7" stroke="#a8a8a8"/></svg><svg class="b" style="left:40px;top:302.62px" width="17" height="16" viewBox="0 0 17 16"><path d="M1 4.5L6 1.5L16 7.5L11 10.5Z" fill="#b5cc4a" stroke="#222" stroke-width="0.9"/><path d="M1 4.5L11 10.5V15L1 9Z" fill="#8fa838" stroke="#222" stroke-width="0.9"/><path d="M11 10.5L16 7.5V12L11 15Z" fill="#3d4a66" stroke="#222" stroke-width="0.9"/><path d="M8 4L11 2.2L16 5.2V9L11 12V8Z" fill="#5b82d6" stroke="#222" stroke-width="0.7"/><path d="M3 6L9 9.6" stroke="#333" stroke-width="0.7"/></svg><div class="t" style="left:58px;top:299.62px;line-height:22px;font-size:11px;color:#303030;font-weight:normal;">Travetta</div><svg class="b" style="left:26.5px;top:322.4px" width="9" height="9" viewBox="0 0 9 9"><rect x="0.5" y="0.5" width="8" height="8" fill="#fff" stroke="#c4c4c4"/><path d="M2 4.5H7" stroke="#a8a8a8"/><path d="M4.5 2V7" stroke="#a8a8a8"/></svg><svg class="b" style="left:40px;top:318.9px" width="17" height="16" viewBox="0 0 17 16"><path d="M1 4.5L6 1.5L16 7.5L11 10.5Z" fill="#b5cc4a" stroke="#222" stroke-width="0.9"/><path d="M1 4.5L11 10.5V15L1 9Z" fill="#8fa838" stroke="#222" stroke-width="0.9"/><path d="M11 10.5L16 7.5V12L11 15Z" fill="#3d4a66" stroke="#222" stroke-width="0.9"/><path d="M8 4L11 2.2L16 5.2V9L11 12V8Z" fill="#5b82d6" stroke="#222" stroke-width="0.7"/><path d="M3 6L9 9.6" stroke="#333" stroke-width="0.7"/></svg><div class="t" style="left:58px;top:315.9px;line-height:22px;font-size:11px;color:#303030;font-weight:normal;">Trave Posteriore</div><svg class="b" style="left:26.5px;top:338.68px" width="9" height="9" viewBox="0 0 9 9"><rect x="0.5" y="0.5" width="8" height="8" fill="#fff" stroke="#c4c4c4"/><path d="M2 4.5H7" stroke="#a8a8a8"/><path d="M4.5 2V7" stroke="#a8a8a8"/></svg><svg class="b" style="left:40px;top:335.18px" width="17" height="16" viewBox="0 0 17 16"><path d="M1 4.5L6 1.5L16 7.5L11 10.5Z" fill="#b5cc4a" stroke="#222" stroke-width="0.9"/><path d="M1 4.5L11 10.5V15L1 9Z" fill="#8fa838" stroke="#222" stroke-width="0.9"/><path d="M11 10.5L16 7.5V12L11 15Z" fill="#3d4a66" stroke="#222" stroke-width="0.9"/><path d="M8 4L11 2.2L16 5.2V9L11 12V8Z" fill="#5b82d6" stroke="#222" stroke-width="0.7"/><path d="M3 6L9 9.6" stroke="#333" stroke-width="0.7"/></svg><div class="t" style="left:58px;top:332.18px;line-height:22px;font-size:11px;color:#303030;font-weight:normal;">Trave Laterale</div><svg class="b" style="left:26.5px;top:354.96000000000004px" width="9" height="9" viewBox="0 0 9 9"><rect x="0.5" y="0.5" width="8" height="8" fill="#fff" stroke="#c4c4c4"/><path d="M2 4.5H7" stroke="#a8a8a8"/><path d="M4.5 2V7" stroke="#a8a8a8"/></svg><svg class="b" style="left:40px;top:351.46000000000004px" width="17" height="16" viewBox="0 0 17 16"><path d="M1 4.5L6 1.5L16 7.5L11 10.5Z" fill="#b5cc4a" stroke="#222" stroke-width="0.9"/><path d="M1 4.5L11 10.5V15L1 9Z" fill="#8fa838" stroke="#222" stroke-width="0.9"/><path d="M11 10.5L16 7.5V12L11 15Z" fill="#3d4a66" stroke="#222" stroke-width="0.9"/><path d="M8 4L11 2.2L16 5.2V9L11 12V8Z" fill="#5b82d6" stroke="#222" stroke-width="0.7"/><path d="M3 6L9 9.6" stroke="#333" stroke-width="0.7"/></svg><div class="t" style="left:58px;top:348.46000000000004px;line-height:22px;font-size:11px;color:#303030;font-weight:normal;">Pilastro 200x80</div><svg class="b" style="left:26.5px;top:371.24px" width="9" height="9" viewBox="0 0 9 9"><rect x="0.5" y="0.5" width="8" height="8" fill="#fff" stroke="#c4c4c4"/><path d="M2 4.5H7" stroke="#a8a8a8"/><path d="M4.5 2V7" stroke="#a8a8a8"/></svg><svg class="b" style="left:40px;top:367.74px" width="17" height="16" viewBox="0 0 17 16"><path d="M1 4.5L6 1.5L16 7.5L11 10.5Z" fill="#b5cc4a" stroke="#222" stroke-width="0.9"/><path d="M1 4.5L11 10.5V15L1 9Z" fill="#8fa838" stroke="#222" stroke-width="0.9"/><path d="M11 10.5L16 7.5V12L11 15Z" fill="#3d4a66" stroke="#222" stroke-width="0.9"/><path d="M8 4L11 2.2L16 5.2V9L11 12V8Z" fill="#5b82d6" stroke="#222" stroke-width="0.7"/><path d="M3 6L9 9.6" stroke="#333" stroke-width="0.7"/></svg><div class="t" style="left:58px;top:364.74px;line-height:22px;font-size:11px;color:#303030;font-weight:normal;">Trave Laterale</div><svg class="b" style="left:26.5px;top:387.52px" width="9" height="9" viewBox="0 0 9 9"><rect x="0.5" y="0.5" width="8" height="8" fill="#fff" stroke="#c4c4c4"/><path d="M2 4.5H7" stroke="#a8a8a8"/><path d="M4.5 2V7" stroke="#a8a8a8"/></svg><svg class="b" style="left:40px;top:384.02px" width="17" height="16" viewBox="0 0 17 16"><path d="M1 4.5L6 1.5L16 7.5L11 10.5Z" fill="#b5cc4a" stroke="#222" stroke-width="0.9"/><path d="M1 4.5L11 10.5V15L1 9Z" fill="#8fa838" stroke="#222" stroke-width="0.9"/><path d="M11 10.5L16 7.5V12L11 15Z" fill="#3d4a66" stroke="#222" stroke-width="0.9"/><path d="M8 4L11 2.2L16 5.2V9L11 12V8Z" fill="#5b82d6" stroke="#222" stroke-width="0.7"/><path d="M3 6L9 9.6" stroke="#333" stroke-width="0.7"/></svg><div class="t" style="left:58px;top:381.02px;line-height:22px;font-size:11px;color:#303030;font-weight:normal;">Pilastro 200x80</div><svg class="b" style="left:26.5px;top:403.8px" width="9" height="9" viewBox="0 0 9 9"><rect x="0.5" y="0.5" width="8" height="8" fill="#fff" stroke="#c4c4c4"/><path d="M2 4.5H7" stroke="#a8a8a8"/><path d="M4.5 2V7" stroke="#a8a8a8"/></svg><svg class="b" style="left:40px;top:400.3px" width="17" height="16" viewBox="0 0 17 16"><path d="M1 4.5L6 1.5L16 7.5L11 10.5Z" fill="#b5cc4a" stroke="#222" stroke-width="0.9"/><path d="M1 4.5L11 10.5V15L1 9Z" fill="#8fa838" stroke="#222" stroke-width="0.9"/><path d="M11 10.5L16 7.5V12L11 15Z" fill="#3d4a66" stroke="#222" stroke-width="0.9"/><path d="M8 4L11 2.2L16 5.2V9L11 12V8Z" fill="#5b82d6" stroke="#222" stroke-width="0.7"/><path d="M3 6L9 9.6" stroke="#333" stroke-width="0.7"/></svg><div class="t" style="left:58px;top:397.3px;line-height:22px;font-size:11px;color:#303030;font-weight:normal;">Trave Laterale</div><svg class="b" style="left:26.5px;top:420.08000000000004px" width="9" height="9" viewBox="0 0 9 9"><rect x="0.5" y="0.5" width="8" height="8" fill="#fff" stroke="#c4c4c4"/><path d="M2 4.5H7" stroke="#a8a8a8"/><path d="M4.5 2V7" stroke="#a8a8a8"/></svg><svg class="b" style="left:40px;top:416.58000000000004px" width="17" height="16" viewBox="0 0 17 16"><path d="M1 4.5L6 1.5L16 7.5L11 10.5Z" fill="#b5cc4a" stroke="#222" stroke-width="0.9"/><path d="M1 4.5L11 10.5V15L1 9Z" fill="#8fa838" stroke="#222" stroke-width="0.9"/><path d="M11 10.5L16 7.5V12L11 15Z" fill="#3d4a66" stroke="#222" stroke-width="0.9"/><path d="M8 4L11 2.2L16 5.2V9L11 12V8Z" fill="#5b82d6" stroke="#222" stroke-width="0.7"/><path d="M3 6L9 9.6" stroke="#333" stroke-width="0.7"/></svg><div class="t" style="left:58px;top:413.58000000000004px;line-height:22px;font-size:11px;color:#303030;font-weight:normal;">Pilastro 200x80</div><svg class="b" style="left:26.5px;top:436.36px" width="9" height="9" viewBox="0 0 9 9"><rect x="0.5" y="0.5" width="8" height="8" fill="#fff" stroke="#c4c4c4"/><path d="M2 4.5H7" stroke="#a8a8a8"/><path d="M4.5 2V7" stroke="#a8a8a8"/></svg><svg class="b" style="left:40px;top:432.86px" width="17" height="16" viewBox="0 0 17 16"><path d="M1 4.5L6 1.5L16 7.5L11 10.5Z" fill="#b5cc4a" stroke="#222" stroke-width="0.9"/><path d="M1 4.5L11 10.5V15L1 9Z" fill="#8fa838" stroke="#222" stroke-width="0.9"/><path d="M11 10.5L16 7.5V12L11 15Z" fill="#3d4a66" stroke="#222" stroke-width="0.9"/><path d="M8 4L11 2.2L16 5.2V9L11 12V8Z" fill="#5b82d6" stroke="#222" stroke-width="0.7"/><path d="M3 6L9 9.6" stroke="#333" stroke-width="0.7"/></svg><div class="t" style="left:58px;top:429.86px;line-height:22px;font-size:11px;color:#303030;font-weight:normal;">Trave Posteriore L</div><svg class="b" style="left:26.5px;top:452.64px" width="9" height="9" viewBox="0 0 9 9"><rect x="0.5" y="0.5" width="8" height="8" fill="#fff" stroke="#c4c4c4"/><path d="M2 4.5H7" stroke="#a8a8a8"/><path d="M4.5 2V7" stroke="#a8a8a8"/></svg><svg class="b" style="left:40px;top:449.14px" width="17" height="16" viewBox="0 0 17 16"><path d="M1 4.5L6 1.5L16 7.5L11 10.5Z" fill="#b5cc4a" stroke="#222" stroke-width="0.9"/><path d="M1 4.5L11 10.5V15L1 9Z" fill="#8fa838" stroke="#222" stroke-width="0.9"/><path d="M11 10.5L16 7.5V12L11 15Z" fill="#3d4a66" stroke="#222" stroke-width="0.9"/><path d="M8 4L11 2.2L16 5.2V9L11 12V8Z" fill="#5b82d6" stroke="#222" stroke-width="0.7"/><path d="M3 6L9 9.6" stroke="#333" stroke-width="0.7"/></svg><div class="t" style="left:58px;top:446.14px;line-height:22px;font-size:11px;color:#303030;font-weight:normal;">Travetta</div><svg class="b" style="left:26.5px;top:468.92px" width="9" height="9" viewBox="0 0 9 9"><rect x="0.5" y="0.5" width="8" height="8" fill="#fff" stroke="#c4c4c4"/><path d="M2 4.5H7" stroke="#a8a8a8"/><path d="M4.5 2V7" stroke="#a8a8a8"/></svg><svg class="b" style="left:40px;top:465.42px" width="17" height="16" viewBox="0 0 17 16"><path d="M1 4.5L6 1.5L16 7.5L11 10.5Z" fill="#b5cc4a" stroke="#222" stroke-width="0.9"/><path d="M1 4.5L11 10.5V15L1 9Z" fill="#8fa838" stroke="#222" stroke-width="0.9"/><path d="M11 10.5L16 7.5V12L11 15Z" fill="#3d4a66" stroke="#222" stroke-width="0.9"/><path d="M8 4L11 2.2L16 5.2V9L11 12V8Z" fill="#5b82d6" stroke="#222" stroke-width="0.7"/><path d="M3 6L9 9.6" stroke="#333" stroke-width="0.7"/></svg><div class="t" style="left:58px;top:462.42px;line-height:22px;font-size:11px;color:#303030;font-weight:normal;">Travetta</div><svg class="b" style="left:26.5px;top:485.20000000000005px" width="9" height="9" viewBox="0 0 9 9"><rect x="0.5" y="0.5" width="8" height="8" fill="#fff" stroke="#c4c4c4"/><path d="M2 4.5H7" stroke="#a8a8a8"/><path d="M4.5 2V7" stroke="#a8a8a8"/></svg><svg class="b" style="left:40px;top:481.70000000000005px" width="17" height="16" viewBox="0 0 17 16"><path d="M1 4.5L6 1.5L16 7.5L11 10.5Z" fill="#b5cc4a" stroke="#222" stroke-width="0.9"/><path d="M1 4.5L11 10.5V15L1 9Z" fill="#8fa838" stroke="#222" stroke-width="0.9"/><path d="M11 10.5L16 7.5V12L11 15Z" fill="#3d4a66" stroke="#222" stroke-width="0.9"/><path d="M8 4L11 2.2L16 5.2V9L11 12V8Z" fill="#5b82d6" stroke="#222" stroke-width="0.7"/><path d="M3 6L9 9.6" stroke="#333" stroke-width="0.7"/></svg><div class="t" style="left:58px;top:478.70000000000005px;line-height:22px;font-size:11px;color:#303030;font-weight:normal;">Trave Laterale</div><svg class="b" style="left:26.5px;top:501.48px" width="9" height="9" viewBox="0 0 9 9"><rect x="0.5" y="0.5" width="8" height="8" fill="#fff" stroke="#c4c4c4"/><path d="M2 4.5H7" stroke="#a8a8a8"/><path d="M4.5 2V7" stroke="#a8a8a8"/></svg><svg class="b" style="left:40px;top:497.98px" width="17" height="16" viewBox="0 0 17 16"><path d="M1 4.5L6 1.5L16 7.5L11 10.5Z" fill="#b5cc4a" stroke="#222" stroke-width="0.9"/><path d="M1 4.5L11 10.5V15L1 9Z" fill="#8fa838" stroke="#222" stroke-width="0.9"/><path d="M11 10.5L16 7.5V12L11 15Z" fill="#3d4a66" stroke="#222" stroke-width="0.9"/><path d="M8 4L11 2.2L16 5.2V9L11 12V8Z" fill="#5b82d6" stroke="#222" stroke-width="0.7"/><path d="M3 6L9 9.6" stroke="#333" stroke-width="0.7"/></svg><div class="t" style="left:58px;top:494.98px;line-height:22px;font-size:11px;color:#303030;font-weight:normal;">Pilastro 200x80</div><svg class="b" style="left:26.5px;top:517.76px" width="9" height="9" viewBox="0 0 9 9"><rect x="0.5" y="0.5" width="8" height="8" fill="#fff" stroke="#c4c4c4"/><path d="M2 4.5H7" stroke="#a8a8a8"/><path d="M4.5 2V7" stroke="#a8a8a8"/></svg><svg class="b" style="left:40px;top:514.26px" width="17" height="16" viewBox="0 0 17 16"><path d="M1 4.5L6 1.5L16 7.5L11 10.5Z" fill="#b5cc4a" stroke="#222" stroke-width="0.9"/><path d="M1 4.5L11 10.5V15L1 9Z" fill="#8fa838" stroke="#222" stroke-width="0.9"/><path d="M11 10.5L16 7.5V12L11 15Z" fill="#3d4a66" stroke="#222" stroke-width="0.9"/><path d="M8 4L11 2.2L16 5.2V9L11 12V8Z" fill="#5b82d6" stroke="#222" stroke-width="0.7"/><path d="M3 6L9 9.6" stroke="#333" stroke-width="0.7"/></svg><div class="t" style="left:58px;top:511.26px;line-height:22px;font-size:11px;color:#303030;font-weight:normal;">Trave Laterale</div><svg class="b" style="left:26.5px;top:534.04px" width="9" height="9" viewBox="0 0 9 9"><rect x="0.5" y="0.5" width="8" height="8" fill="#fff" stroke="#c4c4c4"/><path d="M2 4.5H7" stroke="#a8a8a8"/><path d="M4.5 2V7" stroke="#a8a8a8"/></svg><svg class="b" style="left:40px;top:530.54px" width="17" height="16" viewBox="0 0 17 16"><path d="M1 4.5L6 1.5L16 7.5L11 10.5Z" fill="#b5cc4a" stroke="#222" stroke-width="0.9"/><path d="M1 4.5L11 10.5V15L1 9Z" fill="#8fa838" stroke="#222" stroke-width="0.9"/><path d="M11 10.5L16 7.5V12L11 15Z" fill="#3d4a66" stroke="#222" stroke-width="0.9"/><path d="M8 4L11 2.2L16 5.2V9L11 12V8Z" fill="#5b82d6" stroke="#222" stroke-width="0.7"/><path d="M3 6L9 9.6" stroke="#333" stroke-width="0.7"/></svg><div class="t" style="left:58px;top:527.54px;line-height:22px;font-size:11px;color:#303030;font-weight:normal;">Trave Laterale</div><svg class="b" style="left:26.5px;top:550.32px" width="9" height="9" viewBox="0 0 9 9"><rect x="0.5" y="0.5" width="8" height="8" fill="#fff" stroke="#c4c4c4"/><path d="M2 4.5H7" stroke="#a8a8a8"/><path d="M4.5 2V7" stroke="#a8a8a8"/></svg><svg class="b" style="left:40px;top:546.82px" width="17" height="16" viewBox="0 0 17 16"><path d="M1 4.5L6 1.5L16 7.5L11 10.5Z" fill="#b5cc4a" stroke="#222" stroke-width="0.9"/><path d="M1 4.5L11 10.5V15L1 9Z" fill="#8fa838" stroke="#222" stroke-width="0.9"/><path d="M11 10.5L16 7.5V12L11 15Z" fill="#3d4a66" stroke="#222" stroke-width="0.9"/><path d="M8 4L11 2.2L16 5.2V9L11 12V8Z" fill="#5b82d6" stroke="#222" stroke-width="0.7"/><path d="M3 6L9 9.6" stroke="#333" stroke-width="0.7"/></svg><div class="t" style="left:58px;top:543.82px;line-height:22px;font-size:11px;color:#303030;font-weight:normal;">Pilastro 200x80</div><svg class="b" style="left:26.5px;top:566.6px" width="9" height="9" viewBox="0 0 9 9"><rect x="0.5" y="0.5" width="8" height="8" fill="#fff" stroke="#c4c4c4"/><path d="M2 4.5H7" stroke="#a8a8a8"/><path d="M4.5 2V7" stroke="#a8a8a8"/></svg><svg class="b" style="left:40px;top:563.1px" width="17" height="16" viewBox="0 0 17 16"><path d="M1 4.5L6 1.5L16 7.5L11 10.5Z" fill="#b5cc4a" stroke="#222" stroke-width="0.9"/><path d="M1 4.5L11 10.5V15L1 9Z" fill="#8fa838" stroke="#222" stroke-width="0.9"/><path d="M11 10.5L16 7.5V12L11 15Z" fill="#3d4a66" stroke="#222" stroke-width="0.9"/><path d="M8 4L11 2.2L16 5.2V9L11 12V8Z" fill="#5b82d6" stroke="#222" stroke-width="0.7"/><path d="M3 6L9 9.6" stroke="#333" stroke-width="0.7"/></svg><div class="t" style="left:58px;top:560.1px;line-height:22px;font-size:11px;color:#303030;font-weight:normal;">Trave Posteriore</div><svg class="b" style="left:26.5px;top:582.88px" width="9" height="9" viewBox="0 0 9 9"><rect x="0.5" y="0.5" width="8" height="8" fill="#fff" stroke="#c4c4c4"/><path d="M2 4.5H7" stroke="#a8a8a8"/><path d="M4.5 2V7" stroke="#a8a8a8"/></svg><svg class="b" style="left:40px;top:579.38px" width="17" height="16" viewBox="0 0 17 16"><path d="M1 4.5L6 1.5L16 7.5L11 10.5Z" fill="#b5cc4a" stroke="#222" stroke-width="0.9"/><path d="M1 4.5L11 10.5V15L1 9Z" fill="#8fa838" stroke="#222" stroke-width="0.9"/><path d="M11 10.5L16 7.5V12L11 15Z" fill="#3d4a66" stroke="#222" stroke-width="0.9"/><path d="M8 4L11 2.2L16 5.2V9L11 12V8Z" fill="#5b82d6" stroke="#222" stroke-width="0.7"/><path d="M3 6L9 9.6" stroke="#333" stroke-width="0.7"/></svg><div class="t" style="left:58px;top:576.38px;line-height:22px;font-size:11px;color:#303030;font-weight:normal;">Pilastro 200x80</div><svg class="b" style="left:26.5px;top:599.1600000000001px" width="9" height="9" viewBox="0 0 9 9"><rect x="0.5" y="0.5" width="8" height="8" fill="#fff" stroke="#c4c4c4"/><path d="M2 4.5H7" stroke="#a8a8a8"/><path d="M4.5 2V7" stroke="#a8a8a8"/></svg><svg class="b" style="left:40px;top:595.6600000000001px" width="17" height="16" viewBox="0 0 17 16"><path d="M1 4.5L6 1.5L16 7.5L11 10.5Z" fill="#b5cc4a" stroke="#222" stroke-width="0.9"/><path d="M1 4.5L11 10.5V15L1 9Z" fill="#8fa838" stroke="#222" stroke-width="0.9"/><path d="M11 10.5L16 7.5V12L11 15Z" fill="#3d4a66" stroke="#222" stroke-width="0.9"/><path d="M8 4L11 2.2L16 5.2V9L11 12V8Z" fill="#5b82d6" stroke="#222" stroke-width="0.7"/><path d="M3 6L9 9.6" stroke="#333" stroke-width="0.7"/></svg><div class="t" style="left:58px;top:592.6600000000001px;line-height:22px;font-size:11px;color:#303030;font-weight:normal;">Travetta</div><svg class="b" style="left:26.5px;top:615.44px" width="9" height="9" viewBox="0 0 9 9"><rect x="0.5" y="0.5" width="8" height="8" fill="#fff" stroke="#c4c4c4"/><path d="M2 4.5H7" stroke="#a8a8a8"/><path d="M4.5 2V7" stroke="#a8a8a8"/></svg><svg class="b" style="left:40px;top:611.94px" width="17" height="16" viewBox="0 0 17 16"><path d="M1 4.5L6 1.5L16 7.5L11 10.5Z" fill="#b5cc4a" stroke="#222" stroke-width="0.9"/><path d="M1 4.5L11 10.5V15L1 9Z" fill="#8fa838" stroke="#222" stroke-width="0.9"/><path d="M11 10.5L16 7.5V12L11 15Z" fill="#3d4a66" stroke="#222" stroke-width="0.9"/><path d="M8 4L11 2.2L16 5.2V9L11 12V8Z" fill="#5b82d6" stroke="#222" stroke-width="0.7"/><path d="M3 6L9 9.6" stroke="#333" stroke-width="0.7"/></svg><div class="t" style="left:58px;top:608.94px;line-height:22px;font-size:11px;color:#303030;font-weight:normal;">Travetta</div><svg class="b" style="left:9.5px;top:632.0px" width="9" height="9" viewBox="0 0 9 9"><rect x="0.5" y="0.5" width="8" height="8" fill="#fff" stroke="#c4c4c4"/><path d="M2 4.5H7" stroke="#a8a8a8"/><path d="M4.5 2V7" stroke="#a8a8a8"/></svg><svg class="b" style="left:23px;top:628px" width="16" height="16" viewBox="0 0 16 16"><rect x="1" y="5" width="12" height="9" fill="#444"/><circle cx="4" cy="3.5" r="2.5" fill="#444"/><circle cx="10" cy="3.5" r="2.5" fill="#444"/><path d="M13 7L16 5V13L13 11Z" fill="#444"/><path d="M2 7H12M2 9H12" stroke="#aaa" stroke-width="0.6"/></svg><div class="t" style="left:41px;top:625.5px;line-height:22px;font-size:11px;color:#303030;font-weight:normal;">Telecamere</div><svg class="b" style="left:9.5px;top:648.0px" width="9" height="9" viewBox="0 0 9 9"><rect x="0.5" y="0.5" width="8" height="8" fill="#fff" stroke="#c4c4c4"/><path d="M2 4.5H7" stroke="#a8a8a8"/><path d="M4.5 2V7" stroke="#a8a8a8"/></svg><svg class="b" style="left:23px;top:644px" width="16" height="16" viewBox="0 0 16 16"><path d="M2 1L9 9M4 1L13 10" stroke="#3a6ab0" stroke-width="1.3"/><path d="M8 9L14 15L15 9Z" fill="#d07a8a"/></svg><div class="t" style="left:41px;top:641.5px;line-height:22px;font-size:11px;color:#303030;font-weight:normal;">Luci</div><div class="b" style="left:5px;top:938px;width:56px;height:20px;background:#fafafa;border:1px solid #d0d0d0;border-top:none;box-sizing:border-box"></div><svg class="b" style="left:9px;top:940px" width="12" height="15" viewBox="0 0 12 15"><path d="M6 1L2 13H10Z" fill="none" stroke="#999"/><path d="M4 9H8" stroke="#999"/></svg><div class="t" style="left:24px;top:937.0px;line-height:21.0px;font-size:10.5px;color:#4a4a4a;font-weight:normal;">Scena</div><svg class="b" style="left:64px;top:940px" width="11" height="14" viewBox="0 0 11 14"><rect x="1" y="1" width="9" height="12" fill="#eef2f8" stroke="#555"/><rect x="2.5" y="3" width="6" height="3" fill="#5b7fb8"/></svg><div class="t" style="left:80px;top:937.0px;line-height:21.0px;font-size:10.5px;color:#4a4a4a;font-weight:normal;">Proprietà</div><svg class="b" style="left:133px;top:940px" width="14" height="14" viewBox="0 0 14 14"><circle cx="5.5" cy="5.5" r="4" fill="none" stroke="#555" stroke-width="1.4"/><path d="M8.5 8.5L13 13" stroke="#555" stroke-width="1.8"/></svg><div class="t" style="left:150px;top:937.0px;line-height:21.0px;font-size:10.5px;color:#4a4a4a;font-weight:normal;">Cerca</div><div class="b" style="left:270px;top:148px;width:1350px;height:813px;background:linear-gradient(to bottom,#5275a5 0%,#5477a6 1.7%,#6688b0 13.8%,#7c98bb 26.1%,#90a9c4 38.4%,#a9b9d3 50.7%,#bccbdf 63%,#d0dae7 74%,#e3e7f1 85.1%,#f5f7fa 98.6%,#f7f8fa 100%)"></div><div class="b" style="left:268px;top:146px;width:1352px;height:2px;background:#dde8f3"></div><div class="b" style="left:268px;top:146px;width:2px;height:815px;background:#dde8f3"></div><svg class="b" style="left:0;top:0" width="1798" height="990" viewBox="0 0 1798 990"><line x1="741.5" y1="616.2" x2="739.7" y2="357.8" stroke="#18201c" stroke-width="13.9"/>
<line x1="739.9" y1="616.2" x2="738.0" y2="357.8" stroke="#52605a" stroke-width="1.11"/>
<line x1="742.2" y1="616.2" x2="740.4" y2="357.8" stroke="#737a78" stroke-width="1.39"/>
<line x1="745.7" y1="616.2" x2="743.8" y2="357.8" stroke="#666c78" stroke-width="1.11"/>
<polygon points="732.0,616.7 745.0,611.0 751.9,613.2 738.9,619.7" fill="#141716" stroke="#141716" stroke-width="1"/>
<line x1="739.7" y1="357.8" x2="809.0" y2="437.7" stroke="#141816" stroke-width="6.1"/>
<line x1="740.2" y1="357.3" x2="809.6" y2="437.2" stroke="#d8ddd6" stroke-width="1.84"/>
<line x1="809.0" y1="437.7" x2="809.0" y2="364.8" stroke="#141816" stroke-width="6.2"/>
<line x1="809.8" y1="437.7" x2="809.7" y2="364.8" stroke="#d8ddd6" stroke-width="1.85"/>
<line x1="705.6" y1="374.2" x2="740.2" y2="430.0" stroke="#141816" stroke-width="6.1"/>
<line x1="706.2" y1="373.9" x2="740.8" y2="429.6" stroke="#d8ddd6" stroke-width="1.84"/>
<line x1="809.0" y1="364.8" x2="879.0" y2="445.4" stroke="#141816" stroke-width="6.2"/>
<line x1="809.5" y1="364.4" x2="879.6" y2="444.9" stroke="#d8ddd6" stroke-width="1.87"/>
<line x1="947.9" y1="643.6" x2="950.9" y2="379.4" stroke="#18201c" stroke-width="14.6"/>
<line x1="946.2" y1="643.6" x2="949.2" y2="379.4" stroke="#52605a" stroke-width="1.16"/>
<line x1="948.7" y1="643.6" x2="951.7" y2="379.4" stroke="#737a78" stroke-width="1.46"/>
<line x1="952.3" y1="643.6" x2="955.3" y2="379.4" stroke="#666c78" stroke-width="1.16"/>
<polygon points="937.9,644.0 951.6,638.1 958.9,640.4 945.2,647.2" fill="#141716" stroke="#141716" stroke-width="1"/>
<line x1="879.0" y1="445.4" x2="879.4" y2="372.0" stroke="#141816" stroke-width="6.3"/>
<line x1="879.7" y1="445.4" x2="880.1" y2="372.0" stroke="#d8ddd6" stroke-width="1.88"/>
<line x1="879.4" y1="372.0" x2="950.1" y2="453.3" stroke="#141816" stroke-width="6.3"/>
<line x1="879.9" y1="371.5" x2="950.7" y2="452.8" stroke="#d8ddd6" stroke-width="1.90"/>
<line x1="706.3" y1="448.0" x2="705.6" y2="374.2" stroke="#141816" stroke-width="6.2"/>
<line x1="707.1" y1="448.0" x2="706.3" y2="374.2" stroke="#d8ddd6" stroke-width="1.86"/>
<line x1="950.1" y1="453.3" x2="950.9" y2="379.4" stroke="#141816" stroke-width="6.4"/>
<line x1="950.9" y1="453.3" x2="951.7" y2="379.4" stroke="#d8ddd6" stroke-width="1.92"/>
<line x1="950.9" y1="379.4" x2="1022.4" y2="461.3" stroke="#141816" stroke-width="6.4"/>
<line x1="951.5" y1="378.9" x2="1023.0" y2="460.8" stroke="#d8ddd6" stroke-width="1.93"/>
<line x1="671.0" y1="390.9" x2="706.3" y2="448.0" stroke="#141816" stroke-width="6.2"/>
<line x1="671.7" y1="390.5" x2="707.0" y2="447.6" stroke="#d8ddd6" stroke-width="1.87"/>
<line x1="1022.4" y1="461.3" x2="1023.7" y2="386.8" stroke="#141816" stroke-width="6.5"/>
<line x1="1023.2" y1="461.3" x2="1024.5" y2="386.8" stroke="#d8ddd6" stroke-width="1.95"/>
<line x1="740.2" y1="430.0" x2="1402.5" y2="503.3" stroke="#141816" stroke-width="6.5"/>
<line x1="740.1" y1="430.8" x2="1402.4" y2="504.1" stroke="#d8ddd6" stroke-width="1.96"/>
<line x1="920.1" y1="472.2" x2="950.9" y2="379.4" stroke="#141816" stroke-width="6.4"/>
<line x1="920.8" y1="472.4" x2="951.7" y2="379.6" stroke="#d8ddd6" stroke-width="1.93"/>
<line x1="1023.7" y1="386.8" x2="1095.9" y2="469.4" stroke="#141816" stroke-width="6.5"/>
<line x1="1024.3" y1="386.3" x2="1096.5" y2="468.9" stroke="#d8ddd6" stroke-width="1.96"/>
<line x1="739.7" y1="357.8" x2="1406.5" y2="425.9" stroke="#141816" stroke-width="6.6"/>
<line x1="739.6" y1="358.6" x2="1406.4" y2="426.7" stroke="#d8ddd6" stroke-width="1.97"/>
<line x1="1164.6" y1="672.3" x2="1172.9" y2="402.0" stroke="#18201c" stroke-width="15.3"/>
<line x1="1162.8" y1="672.3" x2="1171.1" y2="402.0" stroke="#52605a" stroke-width="1.22"/>
<line x1="1165.4" y1="672.3" x2="1173.7" y2="402.0" stroke="#737a78" stroke-width="1.53"/>
<line x1="1169.2" y1="672.3" x2="1177.5" y2="402.0" stroke="#666c78" stroke-width="1.22"/>
<polygon points="1154.1,672.8 1168.4,666.6 1176.1,668.9 1161.7,676.1" fill="#141716" stroke="#141716" stroke-width="1"/>
<line x1="1095.9" y1="469.4" x2="1097.7" y2="394.4" stroke="#141816" stroke-width="6.6"/>
<line x1="1096.7" y1="469.4" x2="1098.5" y2="394.4" stroke="#d8ddd6" stroke-width="1.98"/>
<line x1="672.0" y1="466.1" x2="671.0" y2="390.9" stroke="#141816" stroke-width="6.3"/>
<line x1="672.8" y1="466.1" x2="671.8" y2="390.9" stroke="#d8ddd6" stroke-width="1.89"/>
<line x1="1097.7" y1="394.4" x2="1170.6" y2="477.7" stroke="#141816" stroke-width="6.7"/>
<line x1="1098.3" y1="393.8" x2="1171.2" y2="477.1" stroke="#d8ddd6" stroke-width="2.00"/>
<line x1="920.1" y1="472.2" x2="920.7" y2="396.7" stroke="#141816" stroke-width="6.5"/>
<line x1="920.8" y1="472.2" x2="921.5" y2="396.7" stroke="#d8ddd6" stroke-width="1.95"/>
<line x1="1170.6" y1="477.7" x2="1172.9" y2="402.0" stroke="#141816" stroke-width="6.7"/>
<line x1="1171.4" y1="477.7" x2="1173.8" y2="402.1" stroke="#d8ddd6" stroke-width="2.01"/>
<line x1="639.0" y1="406.4" x2="672.0" y2="466.1" stroke="#141816" stroke-width="6.4"/>
<line x1="639.7" y1="406.0" x2="672.7" y2="465.8" stroke="#d8ddd6" stroke-width="1.91"/>
<line x1="1172.9" y1="402.0" x2="1246.6" y2="486.1" stroke="#141816" stroke-width="6.8"/>
<line x1="1173.6" y1="401.5" x2="1247.2" y2="485.5" stroke="#d8ddd6" stroke-width="2.03"/>
<line x1="890.1" y1="414.3" x2="920.1" y2="472.2" stroke="#141816" stroke-width="6.6"/>
<line x1="890.8" y1="414.0" x2="920.8" y2="471.8" stroke="#d8ddd6" stroke-width="1.97"/>
<line x1="1246.6" y1="486.1" x2="1249.5" y2="409.9" stroke="#141816" stroke-width="6.8"/>
<line x1="1247.4" y1="486.1" x2="1250.3" y2="409.9" stroke="#d8ddd6" stroke-width="2.05"/>
<line x1="1144.8" y1="497.6" x2="1172.9" y2="402.0" stroke="#141816" stroke-width="6.8"/>
<line x1="1145.6" y1="497.8" x2="1173.7" y2="402.3" stroke="#d8ddd6" stroke-width="2.03"/>
<line x1="1249.5" y1="409.9" x2="1323.9" y2="494.6" stroke="#141816" stroke-width="6.9"/>
<line x1="1250.1" y1="409.3" x2="1324.5" y2="494.1" stroke="#d8ddd6" stroke-width="2.07"/>
<line x1="640.2" y1="483.0" x2="639.0" y2="406.4" stroke="#141816" stroke-width="6.4"/>
<line x1="641.0" y1="483.0" x2="639.8" y2="406.4" stroke="#d8ddd6" stroke-width="1.92"/>
<line x1="1392.3" y1="702.4" x2="1406.5" y2="425.9" stroke="#18201c" stroke-width="16.1"/>
<line x1="1390.3" y1="702.4" x2="1404.6" y2="425.9" stroke="#52605a" stroke-width="1.29"/>
<line x1="1393.1" y1="702.4" x2="1407.3" y2="425.9" stroke="#737a78" stroke-width="1.61"/>
<line x1="1397.1" y1="702.4" x2="1411.3" y2="425.9" stroke="#666c78" stroke-width="1.29"/>
<polygon points="1381.2,702.9 1396.3,696.4 1404.3,698.9 1389.2,706.5" fill="#141716" stroke="#141716" stroke-width="1"/>
<line x1="1323.9" y1="494.6" x2="1327.3" y2="417.8" stroke="#141816" stroke-width="6.9"/>
<line x1="1324.7" y1="494.7" x2="1328.2" y2="417.9" stroke="#d8ddd6" stroke-width="2.08"/>
<line x1="639.0" y1="406.4" x2="712.7" y2="491.5" stroke="#141816" stroke-width="6.5"/>
<line x1="639.6" y1="405.9" x2="713.3" y2="491.0" stroke="#d8ddd6" stroke-width="1.94"/>
<line x1="889.6" y1="491.3" x2="890.1" y2="414.3" stroke="#141816" stroke-width="6.6"/>
<line x1="890.4" y1="491.3" x2="890.9" y2="414.4" stroke="#d8ddd6" stroke-width="1.99"/>
<line x1="1327.3" y1="417.8" x2="1402.5" y2="503.3" stroke="#141816" stroke-width="7.0"/>
<line x1="1328.0" y1="417.3" x2="1403.2" y2="502.8" stroke="#d8ddd6" stroke-width="2.10"/>
<line x1="712.7" y1="491.5" x2="711.9" y2="414.4" stroke="#141816" stroke-width="6.5"/>
<line x1="713.4" y1="491.5" x2="712.7" y2="414.4" stroke="#d8ddd6" stroke-width="1.95"/>
<line x1="1144.8" y1="497.6" x2="1147.0" y2="420.4" stroke="#141816" stroke-width="6.8"/>
<line x1="1145.6" y1="497.6" x2="1147.9" y2="420.4" stroke="#d8ddd6" stroke-width="2.05"/>
<line x1="603.9" y1="423.4" x2="640.2" y2="483.0" stroke="#141816" stroke-width="6.5"/>
<line x1="604.5" y1="423.0" x2="640.9" y2="482.6" stroke="#d8ddd6" stroke-width="1.94"/>
<line x1="711.9" y1="414.4" x2="786.4" y2="500.3" stroke="#141816" stroke-width="6.6"/>
<line x1="712.5" y1="413.8" x2="787.0" y2="499.7" stroke="#d8ddd6" stroke-width="1.97"/>
<line x1="861.3" y1="509.1" x2="890.1" y2="414.3" stroke="#141816" stroke-width="6.7"/>
<line x1="862.1" y1="509.4" x2="890.8" y2="414.6" stroke="#d8ddd6" stroke-width="2.01"/>
<line x1="786.4" y1="500.3" x2="786.1" y2="422.5" stroke="#141816" stroke-width="6.6"/>
<line x1="787.2" y1="500.3" x2="786.9" y2="422.5" stroke="#d8ddd6" stroke-width="1.99"/>
<polygon points="1116.8,510.9 1153.4,482.9 1155.2,422.9 1118.4,449.2" fill="#858b92"/>
<ellipse cx="1145.3" cy="459.6" rx="3.7" ry="18.5" fill="#a9b8cc" stroke="#4a4f55" stroke-width="0.8"/>
<line x1="440.8" y1="588.6" x2="740.2" y2="430.0" stroke="#141816" stroke-width="6.5"/>
<line x1="441.2" y1="589.3" x2="740.6" y2="430.7" stroke="#d8ddd6" stroke-width="1.95"/>
<line x1="605.4" y1="501.4" x2="603.9" y2="423.4" stroke="#141816" stroke-width="6.5"/>
<line x1="606.2" y1="501.4" x2="604.7" y2="423.4" stroke="#d8ddd6" stroke-width="1.95"/>
<line x1="1120.7" y1="439.0" x2="1144.8" y2="497.6" stroke="#141816" stroke-width="6.9"/>
<line x1="1121.5" y1="438.7" x2="1145.6" y2="497.3" stroke="#d8ddd6" stroke-width="2.07"/>
<line x1="786.1" y1="422.5" x2="861.3" y2="509.1" stroke="#141816" stroke-width="6.7"/>
<line x1="786.7" y1="421.9" x2="861.9" y2="508.6" stroke="#d8ddd6" stroke-width="2.01"/>
<line x1="1385.4" y1="445.3" x2="1402.5" y2="503.3" stroke="#141816" stroke-width="7.1"/>
<line x1="1386.3" y1="445.1" x2="1403.4" y2="503.1" stroke="#d8ddd6" stroke-width="2.14"/>
<line x1="437.9" y1="503.6" x2="739.7" y2="357.8" stroke="#141816" stroke-width="6.5"/>
<line x1="438.2" y1="504.3" x2="740.0" y2="358.5" stroke="#d8ddd6" stroke-width="1.96"/>
<line x1="861.3" y1="509.1" x2="861.6" y2="430.7" stroke="#141816" stroke-width="6.7"/>
<line x1="862.1" y1="509.1" x2="862.4" y2="430.7" stroke="#d8ddd6" stroke-width="2.02"/>
<line x1="861.3" y1="509.1" x2="861.6" y2="430.7" stroke="#141816" stroke-width="6.7"/>
<line x1="862.1" y1="509.1" x2="862.4" y2="430.7" stroke="#d8ddd6" stroke-width="2.02"/>
<line x1="861.6" y1="430.7" x2="937.6" y2="518.1" stroke="#141816" stroke-width="6.8"/>
<line x1="862.2" y1="430.2" x2="938.3" y2="517.6" stroke="#d8ddd6" stroke-width="2.04"/>
<line x1="566.9" y1="441.2" x2="605.4" y2="501.4" stroke="#141816" stroke-width="6.6"/>
<line x1="567.6" y1="440.8" x2="606.0" y2="501.0" stroke="#d8ddd6" stroke-width="1.97"/>
<line x1="1118.7" y1="517.9" x2="1120.7" y2="439.0" stroke="#141816" stroke-width="7.0"/>
<line x1="1119.5" y1="517.9" x2="1121.6" y2="439.0" stroke="#d8ddd6" stroke-width="2.10"/>
<line x1="937.6" y1="518.1" x2="938.5" y2="439.1" stroke="#141816" stroke-width="6.9"/>
<line x1="938.5" y1="518.2" x2="939.3" y2="439.1" stroke="#d8ddd6" stroke-width="2.06"/>
<line x1="640.2" y1="483.0" x2="1340.3" y2="565.8" stroke="#141816" stroke-width="6.9"/>
<line x1="640.1" y1="483.8" x2="1340.2" y2="566.6" stroke="#d8ddd6" stroke-width="2.07"/>
<line x1="1381.5" y1="524.4" x2="1385.4" y2="445.3" stroke="#141816" stroke-width="7.2"/>
<line x1="1382.4" y1="524.5" x2="1386.3" y2="445.4" stroke="#d8ddd6" stroke-width="2.17"/>
<line x1="830.4" y1="448.7" x2="861.3" y2="509.1" stroke="#141816" stroke-width="6.8"/>
<line x1="831.1" y1="448.3" x2="862.1" y2="508.7" stroke="#d8ddd6" stroke-width="2.04"/>
<line x1="938.5" y1="439.1" x2="1015.3" y2="527.3" stroke="#141816" stroke-width="6.9"/>
<line x1="939.1" y1="438.6" x2="1015.9" y2="526.8" stroke="#d8ddd6" stroke-width="2.08"/>
<line x1="568.7" y1="520.8" x2="566.9" y2="441.2" stroke="#141816" stroke-width="6.6"/>
<line x1="569.5" y1="520.8" x2="567.7" y2="441.2" stroke="#d8ddd6" stroke-width="1.99"/>
<line x1="1094.3" y1="536.7" x2="1120.7" y2="439.0" stroke="#141816" stroke-width="7.0"/>
<line x1="1095.2" y1="536.9" x2="1121.6" y2="439.2" stroke="#d8ddd6" stroke-width="2.11"/>
<line x1="639.0" y1="406.4" x2="1344.1" y2="483.4" stroke="#141816" stroke-width="6.9"/>
<line x1="638.9" y1="407.2" x2="1344.0" y2="484.2" stroke="#d8ddd6" stroke-width="2.08"/>
<line x1="1015.3" y1="527.3" x2="1016.7" y2="447.6" stroke="#141816" stroke-width="7.0"/>
<line x1="1016.1" y1="527.3" x2="1017.5" y2="447.7" stroke="#d8ddd6" stroke-width="2.10"/>
<line x1="683.4" y1="621.1" x2="950.1" y2="453.3" stroke="#141816" stroke-width="6.9"/>
<line x1="683.8" y1="621.8" x2="950.5" y2="454.0" stroke="#d8ddd6" stroke-width="2.06"/>
<line x1="566.9" y1="441.2" x2="643.7" y2="530.1" stroke="#141816" stroke-width="6.7"/>
<line x1="567.6" y1="440.7" x2="644.3" y2="529.6" stroke="#d8ddd6" stroke-width="2.01"/>
<line x1="830.3" y1="528.6" x2="830.4" y2="448.7" stroke="#141816" stroke-width="6.9"/>
<line x1="831.1" y1="528.6" x2="831.2" y2="448.7" stroke="#d8ddd6" stroke-width="2.06"/>
<line x1="1364.0" y1="465.0" x2="1381.5" y2="524.4" stroke="#141816" stroke-width="7.3"/>
<line x1="1364.9" y1="464.8" x2="1382.3" y2="524.2" stroke="#d8ddd6" stroke-width="2.19"/>
<line x1="1016.7" y1="447.6" x2="1094.3" y2="536.7" stroke="#141816" stroke-width="7.0"/>
<line x1="1017.3" y1="447.1" x2="1095.0" y2="536.1" stroke="#d8ddd6" stroke-width="2.11"/>
<line x1="643.7" y1="530.1" x2="642.4" y2="449.8" stroke="#141816" stroke-width="6.7"/>
<line x1="644.5" y1="530.1" x2="643.2" y2="449.8" stroke="#d8ddd6" stroke-width="2.02"/>
<line x1="682.3" y1="533.8" x2="950.9" y2="379.4" stroke="#141816" stroke-width="6.9"/>
<line x1="682.7" y1="534.5" x2="951.4" y2="380.1" stroke="#d8ddd6" stroke-width="2.07"/>
<line x1="1094.3" y1="536.7" x2="1096.3" y2="456.3" stroke="#141816" stroke-width="7.1"/>
<line x1="1095.2" y1="536.7" x2="1097.2" y2="456.4" stroke="#d8ddd6" stroke-width="2.13"/>
<line x1="1094.3" y1="536.7" x2="1096.3" y2="456.3" stroke="#141816" stroke-width="7.1"/>
<line x1="1095.2" y1="536.7" x2="1097.2" y2="456.4" stroke="#d8ddd6" stroke-width="2.13"/>
<line x1="529.0" y1="459.5" x2="568.7" y2="520.8" stroke="#141816" stroke-width="6.7"/>
<line x1="529.7" y1="459.1" x2="569.4" y2="520.4" stroke="#d8ddd6" stroke-width="2.00"/>
<line x1="642.4" y1="449.8" x2="720.0" y2="539.6" stroke="#141816" stroke-width="6.8"/>
<line x1="643.0" y1="449.3" x2="720.6" y2="539.0" stroke="#d8ddd6" stroke-width="2.04"/>
<line x1="1096.3" y1="456.3" x2="1174.8" y2="546.2" stroke="#141816" stroke-width="7.2"/>
<line x1="1096.9" y1="455.8" x2="1175.5" y2="545.6" stroke="#d8ddd6" stroke-width="2.15"/>
<line x1="797.7" y1="549.2" x2="830.4" y2="448.7" stroke="#141816" stroke-width="6.9"/>
<line x1="798.5" y1="549.4" x2="831.2" y2="448.9" stroke="#d8ddd6" stroke-width="2.08"/>
<line x1="1360.1" y1="545.8" x2="1364.0" y2="465.0" stroke="#141816" stroke-width="7.4"/>
<line x1="1361.0" y1="545.9" x2="1364.9" y2="465.1" stroke="#d8ddd6" stroke-width="2.21"/>
<line x1="720.0" y1="539.6" x2="719.2" y2="458.6" stroke="#141816" stroke-width="6.9"/>
<line x1="720.8" y1="539.6" x2="720.1" y2="458.6" stroke="#d8ddd6" stroke-width="2.06"/>
<line x1="1174.8" y1="546.2" x2="1177.4" y2="465.2" stroke="#141816" stroke-width="7.2"/>
<line x1="1175.7" y1="546.2" x2="1178.3" y2="465.2" stroke="#d8ddd6" stroke-width="2.17"/>
<line x1="1069.4" y1="475.4" x2="1094.3" y2="536.7" stroke="#141816" stroke-width="7.2"/>
<line x1="1070.2" y1="475.0" x2="1095.1" y2="536.4" stroke="#d8ddd6" stroke-width="2.15"/>
<line x1="531.1" y1="540.8" x2="529.0" y2="459.5" stroke="#141816" stroke-width="6.7"/>
<line x1="531.9" y1="540.7" x2="529.8" y2="459.5" stroke="#d8ddd6" stroke-width="2.02"/>
<line x1="719.2" y1="458.6" x2="797.7" y2="549.2" stroke="#141816" stroke-width="6.9"/>
<line x1="719.9" y1="458.1" x2="798.3" y2="548.6" stroke="#d8ddd6" stroke-width="2.08"/>
<line x1="1177.4" y1="465.2" x2="1256.8" y2="555.9" stroke="#141816" stroke-width="7.3"/>
<line x1="1178.0" y1="464.6" x2="1257.5" y2="555.3" stroke="#d8ddd6" stroke-width="2.19"/>
<line x1="797.7" y1="549.2" x2="797.5" y2="467.6" stroke="#141816" stroke-width="7.0"/>
<line x1="798.5" y1="549.2" x2="798.3" y2="467.6" stroke="#d8ddd6" stroke-width="2.10"/>
<line x1="797.7" y1="549.2" x2="797.5" y2="467.6" stroke="#141816" stroke-width="7.0"/>
<line x1="798.5" y1="549.2" x2="798.3" y2="467.6" stroke="#d8ddd6" stroke-width="2.10"/>
<line x1="1344.1" y1="483.4" x2="1360.1" y2="545.8" stroke="#141816" stroke-width="7.4"/>
<line x1="1344.9" y1="483.2" x2="1361.0" y2="545.6" stroke="#d8ddd6" stroke-width="2.23"/>
<line x1="1256.8" y1="555.9" x2="1260.0" y2="474.2" stroke="#141816" stroke-width="7.4"/>
<line x1="1257.7" y1="555.9" x2="1260.8" y2="474.2" stroke="#d8ddd6" stroke-width="2.21"/>
<line x1="940.7" y1="655.6" x2="1170.6" y2="477.7" stroke="#141816" stroke-width="7.2"/>
<line x1="941.2" y1="656.3" x2="1171.1" y2="478.4" stroke="#d8ddd6" stroke-width="2.17"/>
<line x1="797.5" y1="467.6" x2="876.8" y2="559.0" stroke="#141816" stroke-width="7.1"/>
<line x1="798.1" y1="467.0" x2="877.4" y2="558.4" stroke="#d8ddd6" stroke-width="2.12"/>
<line x1="1067.6" y1="557.3" x2="1069.4" y2="475.4" stroke="#141816" stroke-width="7.3"/>
<line x1="1068.5" y1="557.4" x2="1070.3" y2="475.4" stroke="#d8ddd6" stroke-width="2.18"/>
<line x1="489.0" y1="478.9" x2="531.1" y2="540.8" stroke="#141816" stroke-width="6.8"/>
<line x1="489.7" y1="478.4" x2="531.8" y2="540.3" stroke="#d8ddd6" stroke-width="2.04"/>
<polygon points="1043.2,567.3 1088.9,532.3 1090.4,469.2 1044.5,502.0" fill="#858b92"/>
<ellipse cx="1078.5" cy="509.1" rx="4.6" ry="19.6" fill="#a9b8cc" stroke="#4a4f55" stroke-width="0.8"/>
<line x1="1260.0" y1="474.2" x2="1340.3" y2="565.8" stroke="#141816" stroke-width="7.4"/>
<line x1="1260.6" y1="473.6" x2="1340.9" y2="565.2" stroke="#d8ddd6" stroke-width="2.23"/>
<line x1="876.8" y1="559.0" x2="877.2" y2="476.7" stroke="#141816" stroke-width="7.1"/>
<line x1="877.6" y1="559.0" x2="878.1" y2="476.7" stroke="#d8ddd6" stroke-width="2.14"/>
<line x1="941.7" y1="565.9" x2="1172.9" y2="402.0" stroke="#141816" stroke-width="7.3"/>
<line x1="942.2" y1="566.6" x2="1173.5" y2="402.8" stroke="#d8ddd6" stroke-width="2.18"/>
<line x1="568.7" y1="520.8" x2="1295.3" y2="610.8" stroke="#141816" stroke-width="7.2"/>
<line x1="568.6" y1="521.7" x2="1295.2" y2="611.6" stroke="#d8ddd6" stroke-width="2.15"/>
<line x1="1340.3" y1="565.8" x2="1344.1" y2="483.4" stroke="#141816" stroke-width="7.5"/>
<line x1="1341.2" y1="565.8" x2="1345.0" y2="483.4" stroke="#d8ddd6" stroke-width="2.25"/>
<line x1="763.7" y1="487.0" x2="797.7" y2="549.2" stroke="#141816" stroke-width="7.1"/>
<line x1="764.4" y1="486.6" x2="798.4" y2="548.8" stroke="#d8ddd6" stroke-width="2.12"/>
<line x1="877.2" y1="476.7" x2="957.4" y2="569.0" stroke="#141816" stroke-width="7.2"/>
<line x1="877.8" y1="476.1" x2="958.0" y2="568.4" stroke="#d8ddd6" stroke-width="2.16"/>
<line x1="1039.5" y1="579.1" x2="1069.4" y2="475.4" stroke="#141816" stroke-width="7.3"/>
<line x1="1040.3" y1="579.4" x2="1070.3" y2="475.6" stroke="#d8ddd6" stroke-width="2.20"/>
<line x1="491.5" y1="561.8" x2="489.0" y2="478.9" stroke="#141816" stroke-width="6.9"/>
<line x1="492.3" y1="561.7" x2="489.9" y2="478.8" stroke="#d8ddd6" stroke-width="2.06"/>
<line x1="566.9" y1="441.2" x2="1299.0" y2="524.9" stroke="#141816" stroke-width="7.2"/>
<line x1="566.8" y1="442.1" x2="1298.9" y2="525.7" stroke="#d8ddd6" stroke-width="2.16"/>
<line x1="957.4" y1="569.0" x2="958.4" y2="486.0" stroke="#141816" stroke-width="7.3"/>
<line x1="958.3" y1="569.0" x2="959.3" y2="486.0" stroke="#d8ddd6" stroke-width="2.18"/>
<line x1="1322.1" y1="503.6" x2="1340.3" y2="565.8" stroke="#141816" stroke-width="7.6"/>
<line x1="1323.0" y1="503.3" x2="1341.1" y2="565.5" stroke="#d8ddd6" stroke-width="2.28"/>
<line x1="764.1" y1="570.3" x2="763.7" y2="487.0" stroke="#141816" stroke-width="7.1"/>
<line x1="765.0" y1="570.3" x2="764.5" y2="487.0" stroke="#d8ddd6" stroke-width="2.14"/>
<line x1="958.4" y1="486.0" x2="1039.5" y2="579.1" stroke="#141816" stroke-width="7.3"/>
<line x1="959.1" y1="485.4" x2="1040.2" y2="578.5" stroke="#d8ddd6" stroke-width="2.20"/>
<line x1="1039.5" y1="579.1" x2="1041.1" y2="495.4" stroke="#141816" stroke-width="7.4"/>
<line x1="1040.4" y1="579.1" x2="1042.0" y2="495.4" stroke="#d8ddd6" stroke-width="2.22"/>
<line x1="1039.5" y1="579.1" x2="1041.1" y2="495.4" stroke="#141816" stroke-width="7.4"/>
<line x1="1040.4" y1="579.1" x2="1042.0" y2="495.4" stroke="#d8ddd6" stroke-width="2.22"/>
<line x1="437.9" y1="503.6" x2="491.5" y2="561.8" stroke="#141816" stroke-width="6.9"/>
<line x1="438.5" y1="503.0" x2="492.1" y2="561.2" stroke="#d8ddd6" stroke-width="2.08"/>
<line x1="1214.1" y1="692.2" x2="1402.5" y2="503.3" stroke="#141816" stroke-width="7.7"/>
<line x1="1214.8" y1="692.8" x2="1403.2" y2="504.0" stroke="#d8ddd6" stroke-width="2.30"/>
<line x1="1041.1" y1="495.4" x2="1123.2" y2="589.5" stroke="#141816" stroke-width="7.5"/>
<line x1="1041.8" y1="494.8" x2="1123.8" y2="588.9" stroke="#d8ddd6" stroke-width="2.24"/>
<line x1="1318.4" y1="587.7" x2="1322.1" y2="503.6" stroke="#141816" stroke-width="7.7"/>
<line x1="1319.3" y1="587.7" x2="1323.1" y2="503.6" stroke="#d8ddd6" stroke-width="2.30"/>
<line x1="728.7" y1="592.6" x2="763.7" y2="487.0" stroke="#141816" stroke-width="7.2"/>
<line x1="729.5" y1="592.8" x2="764.5" y2="487.3" stroke="#d8ddd6" stroke-width="2.16"/>
<line x1="448.2" y1="806.8" x2="437.9" y2="503.6" stroke="#18201c" stroke-width="16.0"/>
<line x1="446.3" y1="806.8" x2="436.0" y2="503.6" stroke="#52605a" stroke-width="1.28"/>
<line x1="449.0" y1="806.8" x2="438.7" y2="503.6" stroke="#737a78" stroke-width="1.60"/>
<line x1="453.0" y1="806.8" x2="442.7" y2="503.6" stroke="#666c78" stroke-width="1.28"/>
<polygon points="437.2,807.3 452.2,800.8 460.2,803.3 445.2,810.8" fill="#141716" stroke="#141716" stroke-width="1"/>
<line x1="1123.2" y1="589.5" x2="1125.4" y2="505.0" stroke="#141816" stroke-width="7.5"/>
<line x1="1124.1" y1="589.5" x2="1126.3" y2="505.1" stroke="#d8ddd6" stroke-width="2.26"/>
<line x1="1217.4" y1="600.0" x2="1406.5" y2="425.9" stroke="#141816" stroke-width="7.7"/>
<line x1="1218.0" y1="600.6" x2="1407.1" y2="426.6" stroke="#d8ddd6" stroke-width="2.31"/>
<line x1="1012.0" y1="516.1" x2="1039.5" y2="579.1" stroke="#141816" stroke-width="7.5"/>
<line x1="1012.8" y1="515.7" x2="1040.3" y2="578.8" stroke="#d8ddd6" stroke-width="2.24"/>
<line x1="1125.4" y1="505.0" x2="1208.4" y2="600.0" stroke="#141816" stroke-width="7.6"/>
<line x1="1126.1" y1="504.4" x2="1209.1" y2="599.4" stroke="#d8ddd6" stroke-width="2.28"/>
<line x1="1299.0" y1="524.9" x2="1318.4" y2="587.7" stroke="#141816" stroke-width="7.7"/>
<line x1="1299.9" y1="524.6" x2="1319.3" y2="587.4" stroke="#d8ddd6" stroke-width="2.32"/>
<line x1="728.7" y1="592.6" x2="728.0" y2="507.5" stroke="#141816" stroke-width="7.3"/>
<line x1="729.6" y1="592.6" x2="728.9" y2="507.5" stroke="#d8ddd6" stroke-width="2.18"/>
<line x1="1208.4" y1="600.0" x2="1211.4" y2="514.9" stroke="#141816" stroke-width="7.7"/>
<line x1="1209.4" y1="600.1" x2="1212.3" y2="514.9" stroke="#d8ddd6" stroke-width="2.30"/>
<line x1="437.9" y1="503.6" x2="520.1" y2="599.2" stroke="#141816" stroke-width="7.1"/>
<line x1="438.5" y1="503.0" x2="520.7" y2="598.7" stroke="#d8ddd6" stroke-width="2.13"/>
<line x1="1010.5" y1="601.5" x2="1012.0" y2="516.1" stroke="#141816" stroke-width="7.5"/>
<line x1="1011.4" y1="601.5" x2="1012.9" y2="516.1" stroke="#d8ddd6" stroke-width="2.26"/>
<line x1="1211.4" y1="514.9" x2="1295.3" y2="610.8" stroke="#141816" stroke-width="7.8"/>
<line x1="1212.1" y1="514.3" x2="1296.0" y2="610.2" stroke="#d8ddd6" stroke-width="2.33"/>
<line x1="520.1" y1="599.2" x2="517.8" y2="513.4" stroke="#141816" stroke-width="7.2"/>
<line x1="520.9" y1="599.2" x2="518.6" y2="513.4" stroke="#d8ddd6" stroke-width="2.15"/>
<line x1="1295.3" y1="610.8" x2="1299.0" y2="524.9" stroke="#141816" stroke-width="7.8"/>
<line x1="1296.3" y1="610.8" x2="1299.9" y2="524.9" stroke="#d8ddd6" stroke-width="2.35"/>
<line x1="517.8" y1="513.4" x2="600.9" y2="610.1" stroke="#141816" stroke-width="7.2"/>
<line x1="518.4" y1="512.9" x2="601.6" y2="609.5" stroke="#d8ddd6" stroke-width="2.17"/>
<line x1="682.3" y1="533.8" x2="728.7" y2="592.6" stroke="#141816" stroke-width="7.3"/>
<line x1="683.0" y1="533.2" x2="729.4" y2="592.0" stroke="#d8ddd6" stroke-width="2.20"/>
<line x1="979.9" y1="625.2" x2="1012.0" y2="516.1" stroke="#141816" stroke-width="7.6"/>
<line x1="980.8" y1="625.5" x2="1012.9" y2="516.3" stroke="#d8ddd6" stroke-width="2.29"/>
<line x1="686.1" y1="844.9" x2="682.3" y2="533.8" stroke="#18201c" stroke-width="16.9"/>
<line x1="684.1" y1="844.9" x2="680.3" y2="533.8" stroke="#52605a" stroke-width="1.35"/>
<line x1="687.0" y1="844.9" x2="683.1" y2="533.8" stroke="#737a78" stroke-width="1.69"/>
<line x1="691.2" y1="844.9" x2="687.4" y2="533.8" stroke="#666c78" stroke-width="1.35"/>
<polygon points="674.5,845.5 690.4,838.6 698.9,841.2 683.0,849.2" fill="#141716" stroke="#141716" stroke-width="1"/>
<line x1="600.9" y1="610.1" x2="599.2" y2="523.5" stroke="#141816" stroke-width="7.3"/>
<line x1="601.8" y1="610.0" x2="600.1" y2="523.5" stroke="#d8ddd6" stroke-width="2.19"/>
<line x1="1275.1" y1="546.8" x2="1295.3" y2="610.8" stroke="#141816" stroke-width="7.9"/>
<line x1="1276.0" y1="546.6" x2="1296.2" y2="610.5" stroke="#d8ddd6" stroke-width="2.37"/>
<line x1="599.2" y1="523.5" x2="683.4" y2="621.1" stroke="#141816" stroke-width="7.4"/>
<line x1="599.9" y1="522.9" x2="684.0" y2="620.5" stroke="#d8ddd6" stroke-width="2.21"/>
<polygon points="951.8,637.4 1019.1,585.8 1020.3,519.4 952.6,567.8" fill="#858b92"/>
<ellipse cx="1003.5" cy="564.7" rx="6.7" ry="20.9" fill="#a9b8cc" stroke="#4a4f55" stroke-width="0.8"/>
<line x1="683.4" y1="621.1" x2="682.3" y2="533.8" stroke="#141816" stroke-width="7.4"/>
<line x1="684.3" y1="621.1" x2="683.2" y2="533.8" stroke="#d8ddd6" stroke-width="2.23"/>
<line x1="979.9" y1="625.2" x2="981.2" y2="537.9" stroke="#141816" stroke-width="7.7"/>
<line x1="980.9" y1="625.2" x2="982.1" y2="537.9" stroke="#d8ddd6" stroke-width="2.31"/>
<line x1="682.3" y1="533.8" x2="767.4" y2="632.4" stroke="#141816" stroke-width="7.5"/>
<line x1="683.0" y1="533.2" x2="768.1" y2="631.8" stroke="#d8ddd6" stroke-width="2.25"/>
<line x1="1271.6" y1="634.6" x2="1275.1" y2="546.8" stroke="#141816" stroke-width="8.0"/>
<line x1="1272.5" y1="634.7" x2="1276.1" y2="546.9" stroke="#d8ddd6" stroke-width="2.40"/>
<line x1="767.4" y1="632.4" x2="767.0" y2="544.3" stroke="#141816" stroke-width="7.6"/>
<line x1="768.4" y1="632.4" x2="767.9" y2="544.3" stroke="#d8ddd6" stroke-width="2.28"/>
<line x1="440.8" y1="588.6" x2="1214.1" y2="692.2" stroke="#141816" stroke-width="7.6"/>
<line x1="440.7" y1="589.5" x2="1214.0" y2="693.1" stroke="#d8ddd6" stroke-width="2.29"/>
<line x1="767.0" y1="544.3" x2="853.2" y2="643.8" stroke="#141816" stroke-width="7.7"/>
<line x1="767.7" y1="543.7" x2="853.9" y2="643.2" stroke="#d8ddd6" stroke-width="2.30"/>
<line x1="941.7" y1="565.9" x2="979.9" y2="625.2" stroke="#141816" stroke-width="7.8"/>
<line x1="942.4" y1="565.3" x2="980.7" y2="624.7" stroke="#d8ddd6" stroke-width="2.34"/>
<line x1="1249.9" y1="570.1" x2="1271.6" y2="634.6" stroke="#141816" stroke-width="8.1"/>
<line x1="1250.8" y1="569.8" x2="1272.5" y2="634.3" stroke="#d8ddd6" stroke-width="2.43"/>
<line x1="437.9" y1="503.6" x2="1217.4" y2="600.0" stroke="#141816" stroke-width="7.7"/>
<line x1="437.8" y1="504.5" x2="1217.3" y2="600.9" stroke="#d8ddd6" stroke-width="2.31"/>
<line x1="938.2" y1="885.3" x2="941.7" y2="565.9" stroke="#18201c" stroke-width="18.0"/>
<line x1="936.1" y1="885.3" x2="939.5" y2="565.9" stroke="#52605a" stroke-width="1.44"/>
<line x1="939.1" y1="885.3" x2="942.6" y2="565.9" stroke="#737a78" stroke-width="1.80"/>
<line x1="943.6" y1="885.3" x2="947.1" y2="565.9" stroke="#666c78" stroke-width="1.44"/>
<polygon points="925.9,885.9 942.7,878.6 951.7,881.4 934.9,889.8" fill="#141716" stroke="#141716" stroke-width="1"/>
<line x1="853.2" y1="643.8" x2="853.5" y2="554.9" stroke="#141816" stroke-width="7.7"/>
<line x1="854.1" y1="643.9" x2="854.4" y2="555.0" stroke="#d8ddd6" stroke-width="2.32"/>
<line x1="853.5" y1="554.9" x2="940.7" y2="655.6" stroke="#141816" stroke-width="7.8"/>
<line x1="854.2" y1="554.3" x2="941.4" y2="655.0" stroke="#d8ddd6" stroke-width="2.35"/>
<line x1="940.7" y1="655.6" x2="941.7" y2="565.9" stroke="#141816" stroke-width="7.9"/>
<line x1="941.6" y1="655.6" x2="942.6" y2="565.9" stroke="#d8ddd6" stroke-width="2.37"/>
<line x1="1246.4" y1="659.8" x2="1249.9" y2="570.1" stroke="#141816" stroke-width="8.2"/>
<line x1="1247.4" y1="659.9" x2="1250.8" y2="570.1" stroke="#d8ddd6" stroke-width="2.45"/>
<line x1="941.7" y1="565.9" x2="1030.0" y2="667.5" stroke="#141816" stroke-width="8.0"/>
<line x1="942.4" y1="565.2" x2="1030.7" y2="666.9" stroke="#d8ddd6" stroke-width="2.39"/>
<line x1="1030.0" y1="667.5" x2="1031.7" y2="577.0" stroke="#141816" stroke-width="8.1"/>
<line x1="1031.0" y1="667.5" x2="1032.7" y2="577.0" stroke="#d8ddd6" stroke-width="2.42"/>
<line x1="1031.7" y1="577.0" x2="1121.1" y2="679.7" stroke="#141816" stroke-width="8.1"/>
<line x1="1032.4" y1="576.3" x2="1121.8" y2="679.1" stroke="#d8ddd6" stroke-width="2.44"/>
<line x1="1217.4" y1="600.0" x2="1246.4" y2="659.8" stroke="#141816" stroke-width="8.3"/>
<line x1="1218.3" y1="599.5" x2="1247.3" y2="659.4" stroke="#d8ddd6" stroke-width="2.49"/>
<line x1="1205.8" y1="928.2" x2="1217.4" y2="600.0" stroke="#18201c" stroke-width="19.1"/>
<line x1="1203.5" y1="928.2" x2="1215.1" y2="600.0" stroke="#52605a" stroke-width="1.53"/>
<line x1="1206.7" y1="928.2" x2="1218.4" y2="600.0" stroke="#737a78" stroke-width="1.91"/>
<line x1="1211.5" y1="928.2" x2="1223.1" y2="600.0" stroke="#666c78" stroke-width="1.53"/>
<polygon points="1192.6,928.8 1210.6,921.1 1220.1,924.0 1202.2,933.0" fill="#141716" stroke="#141716" stroke-width="1"/>
<line x1="1121.1" y1="679.7" x2="1123.6" y2="588.4" stroke="#141816" stroke-width="8.2"/>
<line x1="1122.1" y1="679.8" x2="1124.6" y2="588.4" stroke="#d8ddd6" stroke-width="2.47"/>
<line x1="1123.6" y1="588.4" x2="1214.1" y2="692.2" stroke="#141816" stroke-width="8.3"/>
<line x1="1124.3" y1="587.7" x2="1214.9" y2="691.5" stroke="#d8ddd6" stroke-width="2.49"/></svg><svg class="b" style="left:296px;top:892px" width="40" height="38" viewBox="0 0 40 38"><text x="8" y="9" font-size="8" fill="#555" font-family="Liberation Sans">z</text><path d="M10 13V30" stroke="#3a3ab0" stroke-width="1.3"/><path d="M7 20L10 12L13 20Z" fill="#3535b0"/><circle cx="11" cy="28" r="2.8" fill="#4caf50"/><path d="M12 30H22" stroke="#d05070" stroke-width="2"/><path d="M20 27L26 30L20 33Z" fill="#d05070"/><text x="29" y="36" font-size="8" fill="#c9a0a8" font-family="Liberation Sans">x</text></svg><div class="b" style="left:1621px;top:121px;width:177px;height:840px;background:#efefef"></div><div class="b" style="left:1619px;top:146px;width:2px;height:815px;background:#d6e2ee"></div><div class="t" style="left:1628px;top:125.0px;line-height:21.0px;font-size:10.5px;color:#555;font-weight:normal;">Catalogo2</div><svg class="b" style="left:1772px;top:133px" width="9" height="5" viewBox="0 0 9 5"><path d="M0 0H9L4.5 5Z" fill="#666"/></svg><svg class="b" style="left:1789px;top:129px" width="9" height="11" viewBox="0 0 9 11"><path d="M2.5 1H6.5V5L8 6.5H1L2.5 5Z" fill="#888" stroke="#666" stroke-width="0.7"/><path d="M4.5 6.5V10" stroke="#777" stroke-width="1"/></svg><div class="b" style="left:1630px;top:147px;width:39px;height:18px;background:#f8f8f8"></div><svg class="b" style="left:1632px;top:149px" width="13" height="15" viewBox="0 0 13 15"><rect x="1" y="1" width="9" height="13" fill="#f4f4f4" stroke="#777"/><path d="M10 3L12 5V14" fill="none" stroke="#999"/></svg><div class="t" style="left:1646px;top:145.5px;line-height:21.0px;font-size:10.5px;color:#333;font-weight:normal;">N...</div><div class="b" style="left:1673px;top:147px;width:42px;height:18px;background:#f8f8f8"></div><svg class="b" style="left:1675px;top:149px" width="13" height="15" viewBox="0 0 13 15"><rect x="1" y="1" width="9" height="13" fill="#f4f4f4" stroke="#777"/><path d="M10 3L12 5V14" fill="none" stroke="#999"/></svg><div class="t" style="left:1689px;top:145.5px;line-height:21.0px;font-size:10.5px;color:#333;font-weight:normal;">Apri</div><div class="b" style="left:1717px;top:147px;width:40px;height:18px;background:#f8f8f8"></div><svg class="b" style="left:1719px;top:149px" width="12" height="14" viewBox="0 0 12 14"><rect x="1" y="3" width="10" height="10" fill="#555"/><rect x="3" y="3" width="6" height="4" fill="#ddd"/><path d="M4 2H11V9" fill="none" stroke="#999"/></svg><div class="t" style="left:1733px;top:145.5px;line-height:21.0px;font-size:10.5px;color:#333;font-weight:normal;">S...</div><div class="b" style="left:1760px;top:147px;width:38px;height:18px;background:#f8f8f8"></div><svg class="b" style="left:1762px;top:149px" width="13" height="15" viewBox="0 0 13 15"><rect x="1" y="1" width="9" height="13" fill="#f4f4f4" stroke="#777"/><path d="M10 3L12 5V14" fill="none" stroke="#999"/></svg><div class="t" style="left:1776px;top:145.5px;line-height:21.0px;font-size:10.5px;color:#333;font-weight:normal;">C...</div><div class="b" style="left:1626px;top:166px;width:160px;height:19px;background:#f7f7f7"></div><div class="t" style="left:1631px;top:164.5px;line-height:21.0px;font-size:10.5px;color:#9a9a9a;font-weight:normal;">Cerca...</div><svg class="b" style="left:1784px;top:168px" width="14" height="14" viewBox="0 0 14 14"><path d="M2 2L12 12M12 2L2 12" stroke="#e53935" stroke-width="2"/></svg><div class="b" style="left:1626px;top:184px;width:172px;height:739px;background:#fff;border:1px solid #c8c8c8;border-right:none;box-sizing:border-box"></div><div class="b" style="left:1626px;top:923px;width:172px;height:18px;background:#f3f3f3"></div><svg class="b" style="left:1633px;top:926px" width="12" height="11" viewBox="0 0 12 11"><path d="M1 5.5L6 1V4H11V7H6V10Z" fill="#bbb"/></svg><div class="t" style="left:1647px;top:921.0px;line-height:21.0px;font-size:10.5px;color:#999;font-weight:normal;">Indie...</div><div class="b" style="left:1685px;top:923px;width:113px;height:17px;background:#fafafa;border-left:1px solid #ddd"></div><div class="t" style="left:1707px;top:921.0px;line-height:21.0px;font-size:10.5px;color:#222;font-weight:normal;">Altri Cataloghi</div><div class="b" style="left:1626px;top:941px;width:58px;height:20px;background:#fafafa;border:1px solid #d0d0d0;border-top:none;box-sizing:border-box"></div><div class="t" style="left:1632px;top:940.5px;line-height:21.0px;font-size:10.5px;color:#555;font-weight:normal;">Catalogo2</div><div class="t" style="left:1692px;top:940.5px;line-height:21.0px;font-size:10.5px;color:#555;font-weight:normal;">Catalogo1</div><div class="t" style="left:1754px;top:940.5px;line-height:21.0px;font-size:10.5px;color:#555;font-weight:normal;">Tools</div><svg class="b" style="left:1786px;top:947px" width="10" height="8" viewBox="0 0 10 8"><path d="M1 1H9" stroke="#555"/><path d="M1 3H9L5 7Z" fill="#555"/></svg><div class="b" style="left:0px;top:961px;width:1798px;height:22px;background:#fbfbfb;border-top:1px solid #d6d6d6;box-sizing:border-box"></div><div class="t" style="left:2px;top:962.0px;line-height:21.0px;font-size:10.5px;color:#4a4a4a;font-weight:normal;">Per Aiuto, premere F1</div><div class="t" style="left:860px;top:962.0px;line-height:21.0px;font-size:10.5px;color:#555;font-weight:normal;">Dimensioni vista 2158 x 1297</div><svg class="b" style="left:1008px;top:964px" width="12" height="16" viewBox="0 0 12 16"><rect x="1" y="2" width="4" height="12" fill="#f2d23c" stroke="#8a7420" stroke-width="0.8"/><path d="M5 4H8M5 7H8M5 10H8" stroke="#555" stroke-width="0.8"/></svg><div class="t" style="left:1024px;top:962.0px;line-height:21.0px;font-size:10.5px;color:#555;font-weight:normal;">Unità</div><div class="t" style="left:1060px;top:962.0px;line-height:21.0px;font-size:10.5px;color:#555;font-weight:normal;">mm: deg</div><svg class="b" style="left:1110px;top:964px" width="16" height="16" viewBox="0 0 16 16"><circle cx="6.5" cy="6.5" r="4.5" fill="#fff" stroke="#444" stroke-width="1.4"/><path d="M10 10L15 15" stroke="#444" stroke-width="2"/></svg><svg class="b" style="left:1132px;top:964px" width="16" height="16" viewBox="0 0 16 16"><circle cx="6.5" cy="6.5" r="4.5" fill="#fff" stroke="#444" stroke-width="1.4"/><path d="M10 10L15 15" stroke="#444" stroke-width="2"/></svg><svg class="b" style="left:1154.5px;top:968.5px" width="7.0" height="5.0" viewBox="0 0 7.0 5.0"><path d="M1 1.5 L3.5 3.75 L6.0 1.5" stroke="#444" stroke-width="1.1" fill="none"/></svg><svg class="b" style="left:1167px;top:964px" width="16" height="16" viewBox="0 0 16 16"><rect x="1" y="3" width="6" height="11" fill="#9fc0e8" stroke="#4a6a9a"/><rect x="8" y="3" width="6" height="11" fill="#cfe0f4" stroke="#4a6a9a"/></svg><svg class="b" style="left:1188.5px;top:968.5px" width="7.0" height="5.0" viewBox="0 0 7.0 5.0"><path d="M1 1.5 L3.5 3.75 L6.0 1.5" stroke="#444" stroke-width="1.1" fill="none"/></svg><svg class="b" style="left:1201px;top:963px" width="17" height="17" viewBox="0 0 17 17"><path d="M8 2V12M2 15H15M4 15L8 12L12 15" stroke="#3a5a9a" stroke-width="1.4" fill="none"/><path d="M6 4L8 0L10 4Z" fill="#3a5a9a"/></svg><svg class="b" style="left:1224px;top:964px" width="17" height="16" viewBox="0 0 17 16"><path d="M2 5L6 2H14V11L10 14H2Z" fill="#f2d23c" stroke="#6a5a20"/><path d="M10 5V14M2 5H10L14 2" fill="none" stroke="#6a5a20"/><path d="M13 7L16 9L13 11Z" fill="#3a6ab0"/></svg><svg class="b" style="left:1246.5px;top:968.5px" width="7.0" height="5.0" viewBox="0 0 7.0 5.0"><path d="M1 1.5 L3.5 3.75 L6.0 1.5" stroke="#444" stroke-width="1.1" fill="none"/></svg><svg class="b" style="left:1258px;top:963px" width="17" height="17" viewBox="0 0 17 17"><path d="M2 5L6 2H15V12L11 15H2Z" fill="#3c82c8" stroke="#2a5a90"/><path d="M2 5H11V15M11 5L15 2" fill="none" stroke="#9fd0f0"/></svg><svg class="b" style="left:1281.5px;top:968.5px" width="7.0" height="5.0" viewBox="0 0 7.0 5.0"><path d="M1 1.5 L3.5 3.75 L6.0 1.5" stroke="#444" stroke-width="1.1" fill="none"/></svg><svg class="b" style="left:1293px;top:964px" width="17" height="16" viewBox="0 0 17 16"><path d="M1 6H8M4 3V9" stroke="#333"/><rect x="8" y="7" width="7" height="8" fill="#5a7ab8" stroke="#333"/></svg><svg class="b" style="left:1315.5px;top:968.5px" width="7.0" height="5.0" viewBox="0 0 7.0 5.0"><path d="M1 1.5 L3.5 3.75 L6.0 1.5" stroke="#444" stroke-width="1.1" fill="none"/></svg><div class="b" style="left:1326px;top:963px;width:19px;height:19px;background:#c8c8c8;border:1px solid #999;box-sizing:border-box"></div><svg class="b" style="left:1328px;top:965px" width="15" height="15" viewBox="0 0 15 15"><path d="M1 5L6 1H14V10L9 14H1Z" fill="#8aa0c0" stroke="#333"/><path d="M1 14L14 1" stroke="#eee"/></svg><svg class="b" style="left:1350px;top:964px" width="17" height="16" viewBox="0 0 17 16"><path d="M2 14L6 4L10 14M8 10L14 2" fill="none" stroke="#888" stroke-width="1.2"/></svg><svg class="b" style="left:1368.5px;top:968.5px" width="7.0" height="5.0" viewBox="0 0 7.0 5.0"><path d="M1 1.5 L3.5 3.75 L6.0 1.5" stroke="#444" stroke-width="1.1" fill="none"/></svg><div class="b" style="left:1379px;top:963px;width:30px;height:19px;background:#c8c8c8;border:1px solid #999;box-sizing:border-box"></div><svg class="b" style="left:1382px;top:964px" width="18" height="17" viewBox="0 0 18 17"><path d="M1 5L5 1H16V12L12 16H1Z" fill="#3c82c8" stroke="#1a3a70"/><path d="M1 5H12V16M12 5L16 1" fill="none" stroke="#1a3a70"/></svg><svg class="b" style="left:1401px;top:969px" width="6" height="4" viewBox="0 0 6 4"><path d="M1 1.2 L3 3.0 L5 1.2" stroke="#444" stroke-width="1.1" fill="none"/></svg><svg class="b" style="left:1412px;top:964px" width="16" height="16" viewBox="0 0 16 16"><path d="M3 12V4L8 2V12M8 7H13V14" fill="none" stroke="#aaa" stroke-width="1.2"/></svg><div class="b" style="left:1434px;top:963px;width:20px;height:19px;background:#cfcfcf;border:1px solid #999;box-sizing:border-box"></div><svg class="b" style="left:1438px;top:965px" width="12" height="15" viewBox="0 0 12 15"><path d="M2 1V13L5 10L8 14L10 13L7 9H11Z" fill="#fff" stroke="#333" stroke-width="0.9"/></svg><svg class="b" style="left:1464px;top:965px" width="12" height="15" viewBox="0 0 12 15"><path d="M2 1V13L5 10L8 14L10 13L7 9H11Z" fill="#fff" stroke="#333" stroke-width="0.9"/></svg><div class="b" style="left:1477px;top:963px;width:131px;height:19px;background:#fafafa"></div><div class="t" style="left:1481px;top:962.0px;line-height:21.0px;font-size:10.5px;color:#222;font-weight:normal;">Qualsiasi</div><svg class="b" style="left:1599px;top:970px" width="6" height="4" viewBox="0 0 6 4"><path d="M0 0H6L3 4Z" fill="#666"/></svg><div class="b" style="left:1609px;top:963px;width:170px;height:19px;background:#fafafa"></div><div class="t" style="left:1611px;top:962.0px;line-height:21.0px;font-size:10.5px;color:#222;font-weight:normal;">Default</div><svg class="b" style="left:1769px;top:970px" width="6" height="4" viewBox="0 0 6 4"><path d="M0 0H6L3 4Z" fill="#666"/></svg><svg class="b" style="left:1781px;top:964px" width="16" height="16" viewBox="0 0 16 16"><rect x="6" y="1" width="5" height="5" fill="#c3152a"/><path d="M8 6V9M3 9H13M3 9V11M13 9V11" stroke="#555"/><rect x="1" y="11" width="4" height="4" fill="#888"/><rect x="11" y="11" width="4" height="4" fill="#888"/></svg><div class="b" style="left:0px;top:983px;width:1798px;height:7px;background:#000"></div>
</body></html>
